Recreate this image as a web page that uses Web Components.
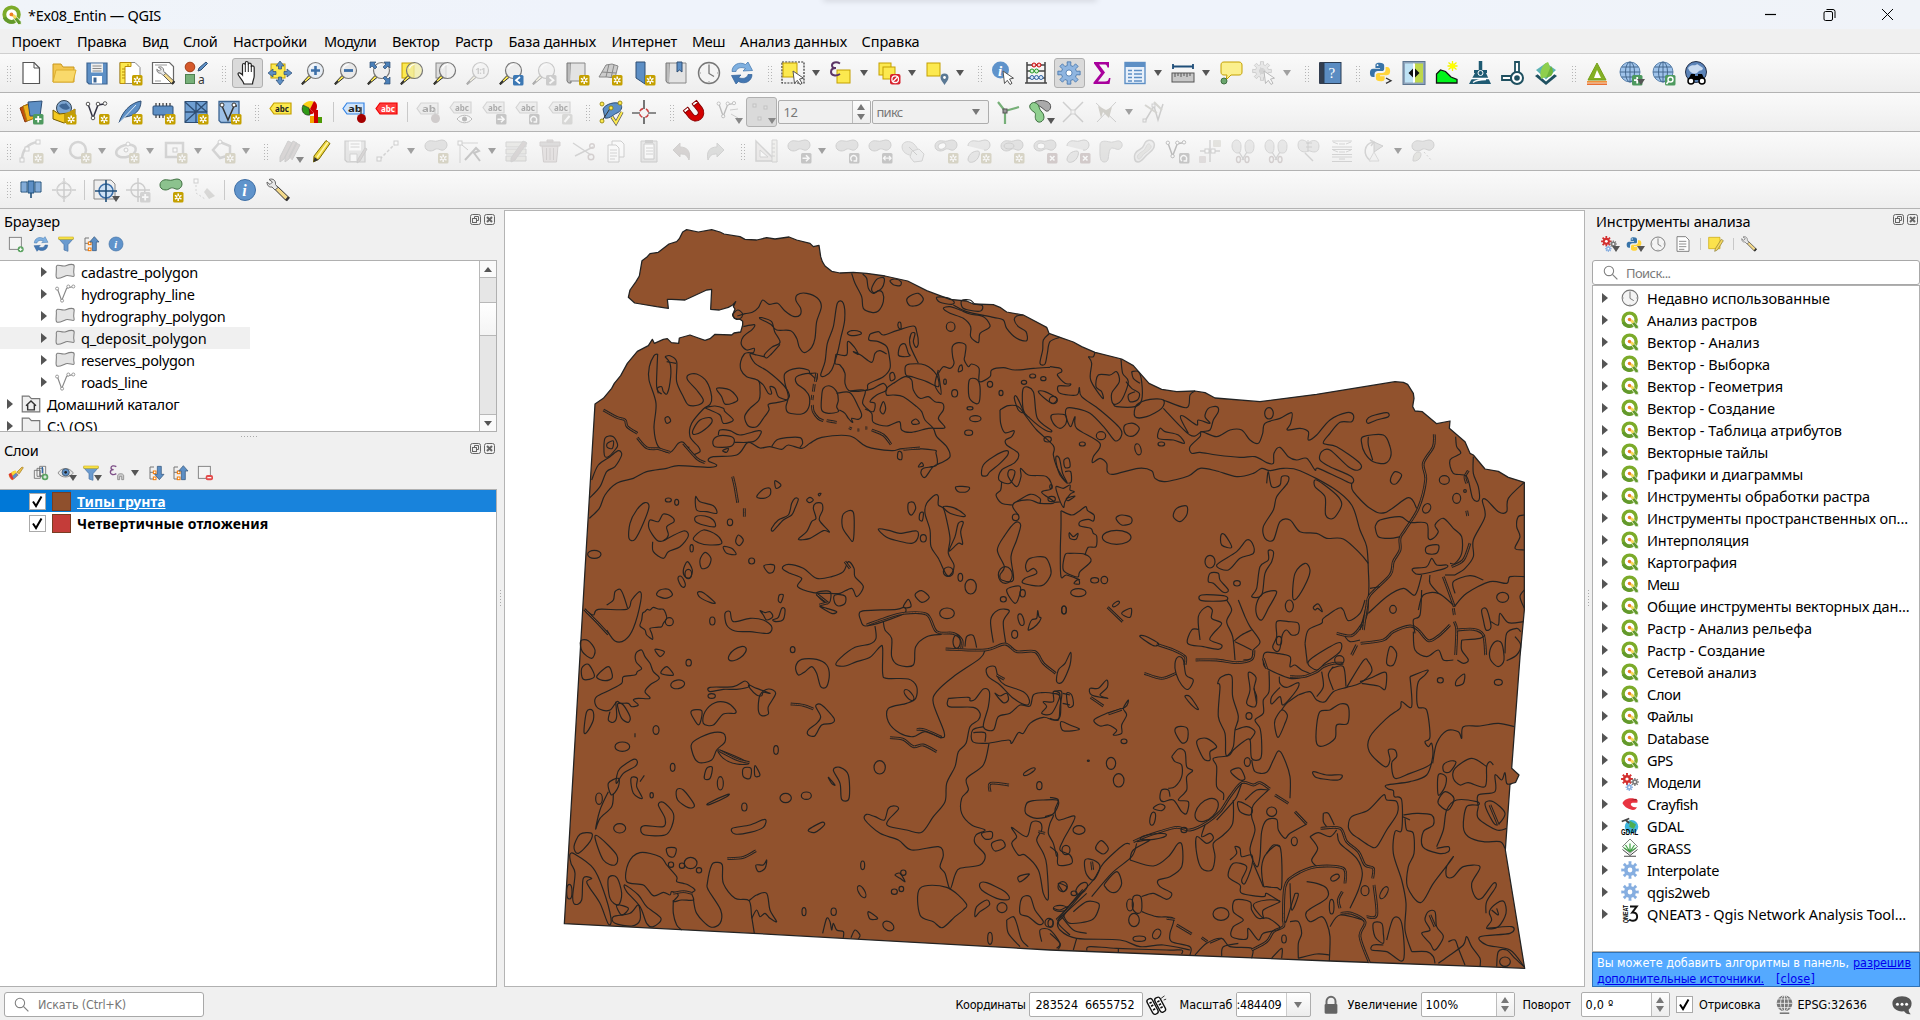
<!DOCTYPE html>
<html lang="ru">
<head>
<meta charset="utf-8">
<title>*Ex08_Entin — QGIS</title>
<style>
html,body{margin:0;height:100%;overflow:hidden}
body{font-family:"Noto Sans","Open Sans",sans-serif;font-size:14px;color:#000;background:#f0f0f0}
</style>
</head>
<body>
<app-window></app-window>
<script>
/* ---------- icon library (24 x 24 grid) ---------- */
const badge=(c,i)=>`<g transform="translate(14 14)"><rect width="10.5" height="10.5" rx="1.5" fill="${c}"/>${i}</g>`;
const STAR=badge('#c4a000','<path d="M5.2 1.5v7.4M1.9 3.3l6.6 3.8M8.5 3.3L1.9 7.1" stroke="#fff" stroke-width="1.5"/><circle cx="5.2" cy="5.2" r="1.1" fill="#c4a000"/>');
const PLUS=badge('#4e9a5f','<path d="M5.2 2v6.5M2 5.2h6.5" stroke="#fff" stroke-width="1.8"/>');
const GPLUS=badge('#999','<path d="M5.2 2v6.5M2 5.2h6.5" stroke="#fff" stroke-width="1.8"/>');
const ARR=badge('#777','<path d="M1.5 5.2h6M5 2.2l3 3-3 3" stroke="#fff" stroke-width="1.6" fill="none"/>');
const ROT=badge('#777','<path d="M3 8a3 3 0 1 1 4-.5M7.500 5v3h-3" stroke="#fff" stroke-width="1.4" fill="none"/>');
const TWO=badge('#777','<path d="M1.500 5.200h7.500M3.500 3l-2 2.200 2 2.200M7 3l2 2.200-2 2.200" stroke="#fff" stroke-width="1.3" fill="none"/>');
const XB=badge('#c77','<path d="M3 3l4.500 4.500M7.500 3L3 7.500" stroke="#fff" stroke-width="1.600"/>');
const lens=(f,s='#777')=>`<path d="M1.500 23.500l-.8-1.200L8 14.500l2 2z" fill="#fce94f" stroke="#333" stroke-width="1"/><path d="M1 23.500l3-3.500" stroke="#333" stroke-width="1.600"/><circle cx="14.500" cy="9.500" r="8" fill="${f}" stroke="${s}" stroke-width="1.200"/><path d="M9.500 7.500a5.500 5.500 0 0 1 5-4" stroke="#fff" stroke-width="1.200" fill="none"/>`;
const blob='<path d="M1 7c0-4 4-6 8-5s6-1 9-1 5 2 5 5-3 6-6 5-4-2-7 0-9 1-9-4z" fill="#bdbdbd" stroke="#8a8a8a"/>';
const smallBlob='<path d="M1 7c0-4 4-6 8-5s6-1 9-1 5 2 5 5-3 6-6 5" fill="#ccc" stroke="#8a8a8a"/><path d="M1 20c1-5 5-8 10-8 3 0 1 8-3 10-3 2-7 2-7-2z" fill="#ccc" stroke="#8a8a8a"/>';
const vline='<path d="M3 4l5 14 5-13 6-1" fill="none" stroke="#555" stroke-width="1.500"/><g fill="#fff" stroke="#555"><circle cx="3" cy="4" r="1.800"/><circle cx="8" cy="18" r="1.800"/><circle cx="13" cy="4" r="1.800"/><circle cx="20" cy="3.500" r="1.800"/></g>';
const gearPath=(c,x,y,r,st='none',hole='#fff')=>{let d='';for(let i=0;i<16;i++){const a=i*Math.PI/8,rr=i%2?r*.68:r;const w=.17;[a-w,a+w].forEach((b,k)=>{d+=(i||k?'L':'M')+(x+Math.cos(b)*rr).toFixed(2)+' '+(y+Math.sin(b)*rr).toFixed(2)})}return`<path d="${d}z" fill="${c}" stroke="${st}" stroke-width=".8"/><circle cx="${x}" cy="${y}" r="${r*.27}" fill="${hole}" stroke="${st}" stroke-width=".8"/>`};
const tag=(f,s,t,c='#222')=>`<path d="M1 7.500L5 2h17v11H5z" fill="${f}" stroke="${s}" stroke-width="1.200"/><text x="6" y="10.600" font-size="9" font-weight="bold" font-family="Noto Sans,sans-serif" fill="${c}" textLength="14" lengthAdjust="spacingAndGlyphs">${t}</text>`;
const globe=(x=12,y=11,r=10)=>`<circle cx="${x}" cy="${y}" r="${r}" fill="#9fc3ea" stroke="#5a82ad"/><g fill="none" stroke="#44688f" stroke-width="1"><ellipse cx="${x}" cy="${y}" rx="${r*.45}" ry="${r}"/><path d="M${x} ${y-r}v${2*r}M${x-r} ${y}h${2*r}M${x-r*.85} ${y-r*.5}h${1.7*r}M${x-r*.85} ${y+r*.5}h${1.7*r}"/></g>`;
const python='<path d="M11.500 2C7 2 7 4 7 5v2.500h5v1H4.500C2 8.500 1 10.500 1 13s1 4.500 3.500 4.500H6v-3C6 12 8 11 9.500 11H14c1.500 0 2.500-1 2.500-2.500V5c0-2-2-3-5-3z" fill="#3873a8"/><path d="M12.500 22c4.500 0 4.500-2 4.500-3v-2.500h-5v-1h7.500c2.500 0 3.500-2 3.500-4.500s-1-4.500-3.500-4.500H18v3c0 2.500-2 3.500-3.500 3.500H10c-1.500 0-2.500 1-2.500 2.500V19c0 2 2 3 5 3z" fill="#ffd43b"/><circle cx="9.300" cy="4.500" r="1" fill="#fff"/>';
const wrench='<path d="M8 9l3-1 11.500 11c1 1.500-1.500 4-3 3L8.500 11z" fill="#f3d98a" stroke="#333"/><path d="M20 22.500l3-3.500" stroke="#333" stroke-width="2.500"/><path d="M3 1.500c4-1.500 7 1 6.500 5l2.500 3-3 2.500-3-3C2.500 9.500 1 7 1 4l3 2.500L6.500 4z" fill="#e8e8e8" stroke="#666"/>';
const cursor='<path d="M12 10l1.500 12.500 2.800-3.200 2.700 4.200 2-1.200-2.500-4.300 4-.8z" fill="#fff" stroke="#555"/>';
const refresh='<path d="M2 10.500C2 4 9 0 15.500 3.500L18 1l4.500 8.500-9.500.5 2.500-2.500C11 5.500 6.500 7 6 10.500z" fill="#7fb0e0" stroke="#3d73ab" stroke-width=".7"/><path d="M22 13.500C22 20 15 24 8.500 20.500L6 23l-4.500-8.500L11 14l-2.500 2.500c4.500 2 9 .5 9.500-3z" fill="#4377b2" stroke="#2f5f97" stroke-width=".7"/>';
const qlogo='<circle cx="11.500" cy="11.500" r="8.700" fill="#fff" stroke="#7cab2a" stroke-width="4.600"/><path d="M3 15a9 9 0 0 0 12 4.500" stroke="#62992c" stroke-width="4.400"/><path d="M13.500 15.500l3-2.500 6.500 7v3.500h-3.500z" fill="#62992c" stroke="#fff" stroke-width=".9"/><path d="M11.500 11l4 .8 2.500 3-2.500 2-4-3.500z" fill="#f6d95c"/><circle cx="11.300" cy="11.300" r="2.300" fill="#ee7f25"/>';
const clock='<circle cx="12" cy="12" r="10.500" fill="#f4f4f4" stroke="#777" stroke-width="1.400"/><path d="M12 4v8.500l5 3" fill="none" stroke="#777" stroke-width="1.300"/><path d="M12 2.500v1.500M12 20v1.500M2.500 12H4M20 12h1.500" stroke="#999"/>';
const info='<circle cx="12" cy="12" r="10.500" fill="#5f93cb" stroke="#3f6fa5"/><text x="9.300" y="18" font-size="16" font-style="italic" font-weight="bold" font-family="Liberation Serif,serif" fill="#fff">i</text>';
const funnel='<path d="M1 4h22l-8 9v10l-6-2v-8z" fill="#6b9bcf" stroke="#4671a3"/><path d="M1 1.500h22v3.500H1z" fill="#fce94f" stroke="#c4a000" stroke-width=".8"/>';
const treeic='<path d="M3 3h6M3 3v18h7M3 11h7" fill="none" stroke="#777" stroke-width="1.500"/><rect x="8" y="9" width="4" height="4" fill="#fff" stroke="#f57900" stroke-width="1.500"/><rect x="8" y="18" width="4" height="4" fill="#fff" stroke="#f57900" stroke-width="1.500"/>';
const cross='<path d="M12 0v24M0 12h24" stroke="#888" stroke-width="1.500"/><circle cx="12" cy="12" r="7" fill="none" stroke="#888" stroke-width="1.500"/>';
const doc='<path d="M3 1h13l5 5v17H3z" fill="#fff" stroke="#666" stroke-width="1.200"/>';
const shears='<path d="M8 13l5 8M16 13l-5 8" stroke="#999" stroke-width="1.400"/><ellipse cx="7.500" cy="20.500" rx="2" ry="3" fill="none" stroke="#b88" stroke-width="1.400"/><ellipse cx="16" cy="20.500" rx="2" ry="3" fill="none" stroke="#b88" stroke-width="1.400"/>';
const ICONS={
qlogo,clock,info,funnel,python,wrench,refresh,
new:'<path d="M4 1.500h11l5.500 5.500v15.500H4z" fill="#fff" stroke="#555" stroke-width="1.200"/><path d="M15 1.500V7h5.500" fill="none" stroke="#555"/>',
open:'<path d="M1 21V3h8l2 3h11v15z" fill="#f3c64f" stroke="#c9971d"/><path d="M1 21L4 9h20l-3 12z" fill="#f9d96b" stroke="#dcae2e"/>',
save:'<path d="M2 2h20v21H4l-2-2z" fill="#5d8fc5" stroke="#3c6491" stroke-width="1.200"/><path d="M6 2.500h12v9H6z" fill="#eee"/><path d="M7.500 5h9M7.500 7.500h9M7.500 10h9" stroke="#888"/><path d="M7 15h10v7.500H7z" fill="#fff"/><path d="M8.500 16.500h3v5h-3z" fill="#3c6491"/>',
layout:'<path d="M2 1.500h15l5 5v16H2z" fill="#fff" stroke="#888"/><path d="M2 1.500h11v4H7v17H2z" fill="#fce94f" stroke="#b98d0b"/><path d="M4 8h3M4 11h3M4 14h3M4 17h3M10 3v2" stroke="#b98d0b"/>'+STAR,
layman:'<path d="M1.500 1.500h17l4 4v17h-21z" fill="#fff" stroke="#666" stroke-width="1.200"/><path d="M4 4h12M4 20h6" stroke="#999"/><g transform="translate(5 5) scale(.8)">'+wrench+'</g>',
style:'<circle cx="6" cy="6" r="4.800" fill="#d5592b" stroke="#a33d17"/><path d="M14 10l1-3 7-6 1.500 1.500L17 9z" fill="#5d8fc5" stroke="#2e4e74"/><rect x="1.500" y="13.500" width="9" height="9" fill="#77b079" stroke="#4e8050"/><text x="14" y="22.500" font-size="12" font-family="Noto Sans,sans-serif" fill="#333">a</text>',
hand:'<path d="M8 23c-1-4-6-8-6-10s2.500-1.500 4.500 1V4c0-2 2.500-2 2.800 0V2c0-2 2.700-2 3 0v1.500c.3-2 3-2 3 .3V6c.4-1.800 2.800-1.500 2.900.5V15c0 3-1.700 5-1.700 8z" fill="#fff" stroke="#222" stroke-width="1.200" transform="translate(1 0)"/><path d="M10.300 4v7M13.300 3v8M16.300 5v6" stroke="#222"/>',
panzoom:'<rect x="3" y="3" width="14" height="14" fill="#fce94f" stroke="#c4a000"/><path d="M12 0l4 5h-2.500v3h-3V5H8zM12 24l4-5h-2.500v-3h-3v3H8zM0 12l5-4v2.500h3v3H5V16zM24 12l-5-4v2.500h-3v3h3V16z" fill="#5d8fc5" stroke="#2e4e74" stroke-width=".7"/>',
zin:lens('#e6edf5')+'<path d="M14.500 5v9M10 9.500h9" stroke="#3c6fa8" stroke-width="2.600"/>',
zout:lens('#e9e9e9')+'<path d="M10 9.500h9" stroke="#3c6fa8" stroke-width="2.800"/>',
zfull:lens('#eee')+'<path d="M3 1h6L7 3l3 3-2 2-3-3-2 2zM23 1h-6l2 2-3 3 2 2 3-3 2 2zM23 23v-7l-2 2-3-3-2 2 3 3-2 3z" fill="#4b80b8" stroke="#2e4e74" stroke-width=".7"/>',
zsel:'<rect x="2" y="2" width="12" height="15" fill="#fce94f" stroke="#c4a000"/>'+lens('#f2eda8bb'),
zlay:'<rect x="3" y="2" width="10" height="15" fill="#ddd" stroke="#888"/>'+lens('#f0f0f0bb'),
z11:lens('#eee')+'<text x="9.300" y="13" font-size="9" font-weight="bold" font-family="Noto Sans,sans-serif" fill="#888" textLength="10.500">1:1</text>',
zlast:lens('#eee')+badge('#3c78b4','<path d="M7 2L3 5.200 7 8.500" stroke="#fff" stroke-width="1.800" fill="none"/>'),
znext:lens('#eee')+badge('#888','<path d="M3.500 2l4 3.200-4 3.300" stroke="#fff" stroke-width="1.800" fill="none"/>'),
bmk:'<path d="M2 2h4v20H3.500L2 20z" fill="#bbb" stroke="#777"/><path d="M6 2h14v18H5" fill="#e3e3e3" stroke="#888"/>'+STAR,
mesh:'<path d="M1 16L8 4l6-1 6 2-3 12-8-1z" fill="#ccc" stroke="#888"/><path d="M4 11l14 1M11 3L8 16M16 4l-3 13" fill="none" stroke="#888"/>'+STAR,
book:'<path d="M5 1h9v22l-4.500-3L5 17z" fill="#5d8fc5" stroke="#2e4e74"/>'+STAR,
bmks:'<path d="M2 2h4v20H3.500L2 20z" fill="#bbb" stroke="#777"/><path d="M6 2h16v20H5" fill="#e3e3e3" stroke="#888"/><path d="M13 1h5v10l-2.500-2L13 11z" fill="#5d8fc5" stroke="#2e4e74"/>',
select:'<rect x="1" y="1" width="22" height="21" fill="none" stroke="#333" stroke-width="1.200" stroke-dasharray="2 1.200"/><rect x="2" y="2" width="14" height="14" fill="#fce94f" stroke="#c4a000"/>'+cursor,
epsel:'<rect x="8" y="9" width="13" height="13" fill="#fce94f" stroke="#c4a000"/><path d="M11 2.500C7 0 3 1.500 3 4.500c0 2 2 2.500 4 2.500-3 0-5 1-5 4 0 3.500 5 4.500 9 2" fill="none" stroke="#5c3566" stroke-width="2"/>',
desel:'<rect x="2" y="2" width="12" height="12" fill="#fce94f" stroke="#c4a000"/><rect x="6" y="6" width="12" height="12" fill="#fce94f" stroke="#c4a000"/><rect x="13" y="13" width="10.500" height="10.500" rx="2" fill="#d8232e"/><circle cx="18.200" cy="18.200" r="3.300" fill="none" stroke="#fff" stroke-width="1.300"/><path d="M16 20.500l4.500-4.500" stroke="#fff" stroke-width="1.300"/>',
selloc:'<rect x="2" y="2" width="13" height="13" fill="#fce94f" stroke="#c4a000"/><path d="M19.500 24c-2-3.500-4-5-4-7.500a4 4 0 0 1 8 0c0 2.500-2 4-4 7.500z" fill="#5a7894"/><circle cx="19.500" cy="16.500" r="1.400" fill="#fff"/>',
ident:'<circle cx="9.500" cy="9" r="8.500" fill="#5f93cb"/><text x="7" y="14.500" font-size="15" font-style="italic" font-weight="bold" font-family="Liberation Serif,serif" fill="#fff">i</text>'+cursor,
abacus:'<path d="M3 1v21M21 1v21M1 22h22M3 4h18M3 10h18M3 17h18" stroke="#444" stroke-width="1.500"/><g fill="#f8d0d0" stroke="#cc0000"><circle cx="10" cy="4" r="2"/><circle cx="15" cy="4" r="2"/></g><g fill="#d5f5d5" stroke="#2a9a2a"><circle cx="8" cy="10" r="2"/><circle cx="12.500" cy="10" r="2"/></g><g fill="#d8e9fa" stroke="#3465a4"><circle cx="8" cy="16.500" r="2"/><circle cx="12.500" cy="16.500" r="2"/><circle cx="17" cy="16.500" r="2"/></g>',
gear:gearPath('#8fb5e0',12,12,11.300,'#4273ab'),
gearp:gearPath('#86aee0',12,12,11.800),
sigma:'<path d="M4 1h15v5.500h-1.500C17 4 16 3.500 14 3.500H9l6 8-7 9h7c2.500 0 3.500-1 4-3.500h1.500L19.500 23H3.500v-1.500L11 12 4 2.500z" fill="#a8009c"/>',
table:'<rect x="2" y="1.500" width="20" height="21" fill="#e8f0fa" stroke="#5d8fc5" stroke-width="1.400"/><path d="M2 2h20v4H2z" fill="#5d8fc5"/><path d="M5 9.500h4M11 9.500h8M5 13h4M11 13h8M5 16.500h4M11 16.500h8M5 20h4M11 20h8" stroke="#5d8fc5" stroke-width="1.300"/>',
ruler:'<path d="M2 5.500h20M2 3v5M22 3v5" stroke="#1f4e79" stroke-width="1.800"/><rect x="1" y="12" width="22" height="9" fill="#c8c8c8" stroke="#555"/><path d="M4 12v4M7 12v3M10 12v4M13 12v3M16 12v4M19 12v3" stroke="#555"/>',
note:'<path d="M5 1h15c2 0 3 1.500 3 3v7c0 2-1 3-3 3h-8l-5 5 1-5H5c-2 0-3-1-3-3V4c0-2 1-3 3-3z" fill="#fbef8d" stroke="#c4a000"/><circle cx="5" cy="20" r="3" fill="#6aa56d" stroke="#3f6f41"/>',
action:gearPath('#ccc',10,10,9.500,'#777','#eee')+'<path d="M8 6l6 4-6 4z" fill="#999"/>'+cursor,
help:'<rect x="1" y="1" width="22" height="22" rx="1" fill="#333e50"/><rect x="6" y="1.500" width="17" height="21" fill="#5b8cc2" stroke="#2b3c52"/><text x="10.500" y="17" font-size="15" font-family="Liberation Serif,serif" fill="#fff">?</text>',
pycon:'<g transform="scale(.92)">'+python+'</g><path d="M17 17l5 2.700-5 2.700" fill="none" stroke="#333" stroke-width="1.300"/>',
swipe:'<rect x="1" y=".5" width="22" height="23" fill="#8fa4bb" stroke="#5c7590"/><rect x="3" y="2.500" width="9" height="19" fill="#bfe3f5"/><rect x="12" y="2.500" width="9" height="19" fill="#bfd84a"/><path d="M12 2.500v19" stroke="#fff" stroke-width="2"/><path d="M11 7.500v9L6.500 12zM13 7.500v9l4.500-4.500z" fill="#111"/>',
terrain:'<path d="M1.500 22V13l4-4 5 1.500L16 16l6 2.500V22z" fill="#00f51b" stroke="#111" stroke-width="1.300"/><path d="M17.500 0v10M13.500 1.500l8 7M21.500 1.500l-8 7M12.500 5h10" stroke="#f5f500" stroke-width="1.300"/><circle cx="17.500" cy="5" r="2.700" fill="#ff0"/>',
boat:'<path d="M1 23L7 12h11l5 11z" fill="#1f5a72"/><path d="M3 17.500h18M5 21.500c4-3 8-3 13-3" stroke="#fff" stroke-width="1.300"/><path d="M6 9h13v3H6z" fill="#1f5a72"/><path d="M12.500 0v11" stroke="#1f5a72" stroke-width="3.500"/><circle cx="12.500" cy="12" r="2.500" fill="#1f5a72" stroke="#fff"/>',
valve:'<path d="M1 15h9v4H1zM14 1h4v12h-4z" fill="#fff" stroke="#1f5060" stroke-width="1.800"/><circle cx="16" cy="17" r="6" fill="#fff" stroke="#1f5060" stroke-width="2"/><circle cx="16" cy="17" r="2.800" fill="#1f5060"/>',
leaf:'<path d="M1 15l11 9 11-9-3-2H4z" fill="#1f5060"/><path d="M1 11l11 9.500L23 11 12 3z" fill="#fff"/><path d="M2 9l10-7 10 7-10 9.500z" fill="#5db3b5"/><path d="M7 18C5 11 8 3 14 1c3 5 3 12-2 15-2 1-4 1-5 2z" fill="#8fcf4d"/><path d="M17 5c2 3 3 7 0 10l-5 2" fill="#6fb53a"/>',
tri:'<path d="M12 2l9 17H3z" fill="#84b025" stroke="#75a01a"/><path d="M12 9l4 8H9z" fill="#fff"/><path d="M2 20.800h20" stroke="#f0913c" stroke-width="1.800"/><path d="M2 23.200h20" stroke="#e9601b" stroke-width="1.400"/>',
globep:globe()+badge('#4e9a5f','<path d="M5.200 2v6.500M2 5.200h6.500" stroke="#fff" stroke-width="1.800"/>'),
globes:globe()+badge('#4e9a5f','<circle cx="5.500" cy="4.500" r="2.500" fill="none" stroke="#fff" stroke-width="1.400"/><path d="M3.500 6.500l-2 2.500" stroke="#fff" stroke-width="1.600"/>'),
globeb:'<circle cx="12" cy="11" r="10.500" fill="#5b83b8" stroke="#222f48"/><path d="M4 7c4-5 7-1 9-4l6 4c-1 4-3 1-5 4s-8 2-10-4z" fill="#c8daf0"/><path d="M7 13h4v2h3v-2h4l3 6H4z" fill="#000"/><circle cx="7" cy="20" r="3" fill="#fff" stroke="#000" stroke-width="1.500"/><circle cx="18" cy="20" r="3" fill="#fff" stroke="#000" stroke-width="1.500"/>',
addlayer:'<path d="M1 8l10-5 5 14-10 5z" fill="#c4500f" stroke="#8a3607"/><path d="M4 6l11-3 4 14-11 4z" fill="#f0b21c" stroke="#a87a0e"/><path d="M9 2l14-1-2 15H11z" fill="#5d8fc5" stroke="#2e4e74"/>'+PLUS,
geopkg:'<circle cx="12" cy="8" r="7.500" fill="#7ea6d2" stroke="#345"/><path d="M7 6c3-4 5-1 7-3l4 5c-3 3-8 2-11-2z" fill="#3f6796"/><path d="M1 10l6 4 10-1 6-4v9l-11 5-11-4z" fill="#f3c921" stroke="#745b00"/><path d="M12 14v9l11-4V9z" fill="#c29b0c"/>'+STAR,
vnew:vline.replace('fill="none" stroke="#555"','fill="none" stroke="#334"')+STAR,
feather:'<path d="M1 23C4 12 12 3 23 1c0 9-6 15-16 16z" fill="#5d8fc5" stroke="#2e4e74"/><path d="M1 23L18 5" stroke="#e0ecf8"/>'+STAR,
chip:'<path d="M5 3v15M8.500 3v15M12 3v15M15.500 3v15M19 3v15" stroke="#444" stroke-width="1.300"/><rect x="2" y="6" width="20" height="9" rx="1" fill="#5d8fc5" stroke="#2e4e74"/>'+STAR,
meshnew:'<rect x="1" y="1.500" width="22" height="21" fill="#6f9fd2" stroke="#2e4e74"/><path d="M1 12h22M12 1v22M1 2l11 10L1 22M12 12L23 2M12 2l5.500 5.500L23 12" fill="none" stroke="#2e4e74" stroke-width="1.300"/>'+STAR,
virt:'<path d="M2 1.500h20v21H4l-2-2z" fill="#9dc0e6" stroke="#3c6491" stroke-width="1.300"/><path d="M5 6l6 14 6-14h3" fill="none" stroke="#333" stroke-width="1.500"/><circle cx="5" cy="5" r="2" fill="#fff" stroke="#333"/><circle cx="17" cy="5" r="2" fill="#fff" stroke="#333"/>'+STAR,
abc:'<g transform="translate(1 1)">'+tag('#fce94f','#c4a000','abc')+'</g>',
chart:'<path d="M9 9L2 5C5 1 10 0 13 2z" fill="#fcd116"/><path d="M9 9l4-8c4 2 4 8 0 12z" fill="#cc0000"/><path d="M9 9l4 4c-4 3-11 0-12-5z" fill="#cc0000"/><path d="M8 8L2 5c-3 7 2 11 7 10z" fill="#2f9a16" stroke="#222" stroke-width=".6"/><path d="M9 16h4v7H9z" fill="#f5a400"/><path d="M13 10h4v13h-4z" fill="#cc0000"/><path d="M17 17h4v6h-4z" fill="#4e9a06"/>',
abpin:'<g transform="translate(0 1)">'+tag('#cfe4fb','#3584e4','ab')+'</g><path d="M19 7v9" stroke="#555" stroke-width="1.500"/><circle cx="19.500" cy="18.500" r="4.500" fill="#a40000"/>',
abcr:'<g transform="translate(0 1)">'+tag('#ff3c3c','#e00','abc','#fff')+'</g>',
l1:'<g transform="translate(0 1)">'+tag('#ddd','#999','ab')+'</g><circle cx="19.500" cy="18.500" r="4.500" fill="#b08080"/><path d="M19 9v7" stroke="#888"/>',
l2:tag('#ddd','#999','abc')+'<path d="M8 19c4-5 11-5 15 0-4 5-11 5-15 0z" fill="#fff" stroke="#555"/><circle cx="15.500" cy="19" r="2.500" fill="#555"/>',
l3:tag('#ddd','#999','abc')+ARR,l4:tag('#ddd','#999','abc')+ROT,l5:tag('#ddd','#999','abc')+badge('#aa9','<path d="M2.500 8l5-6" stroke="#fff" stroke-width="2"/>'),
topo:'<path d="M4 9c2-5 13-8 17-5s0 8-3 9-7 6-12 5z" fill="#5d8fc5" stroke="#2e4e74"/><path d="M3 21L12 7" stroke="#333"/><g fill="#fce94f" stroke="#8a7a00" stroke-width=".8"><circle cx="3" cy="4" r="2"/><circle cx="21" cy="3" r="2"/><circle cx="12" cy="8" r="2"/><circle cx="3" cy="21" r="2"/></g><path d="M13 17l4 6 6-11" fill="none" stroke="#555" stroke-width="3.400"/><path d="M13 17l4 6 6-11" fill="none" stroke="#fce94f" stroke-width="2"/>',
geox:'<path d="M12 0v9M12 17v7M0 13h8M16 13h8" stroke="#222" stroke-width="1.200"/><circle cx="12" cy="13" r="4.500" fill="none" stroke="#c44" stroke-width="1.600" stroke-dasharray="4 3.070" stroke-dashoffset="-1.500"/>',
magnet:'<g transform="rotate(-38 12 12) translate(12 12) scale(.92) translate(-12 -12)"><path d="M3 4v9a9 9 0 0 0 18 0V4h-6v9a3 3 0 0 1-6 0V4z" fill="#d40000" stroke="#800"/><path d="M3 3h6v3H3zM15 3h6v3h-6z" fill="#fff" stroke="#800"/></g>',
snapv:'<g transform="scale(.9)">'+vline+'</g><path d="M14 10l8-1M15 14l7 4" stroke="#888"/>',
snapp:'<g fill="#eee" stroke="#999"><rect x="4" y="4" width="3" height="3"/><rect x="15" y="6" width="3" height="3"/><rect x="9" y="17" width="3" height="3"/></g>',
yint:'<path d="M10 11v13M10 11L3 2M10 11l14-4" stroke="#77b079" stroke-width="2.200"/><rect x="8" y="9" width="4" height="4" fill="#999" stroke="#555"/>',
avoid:'<path d="M6 3c3-4 14-3 16 1s-1 8-4 7l-5-4z" fill="#aaa" stroke="#555"/><path d="M2 5c2-4 8-3 9 2s5 5 5 10-6 7-8 3 1-6-2-8-5-4-4-7z" fill="#8fcf8f" stroke="#3f6f41"/>',
xx:'<path d="M2 2l20 20M22 2L2 22" stroke="#888" stroke-width="1.500"/><rect x="10" y="10" width="4" height="4" fill="#eee" stroke="#999"/>',
self:'<path d="M2 3l20 19M22 2L3 22" stroke="#888"/><path d="M4 6l8 4 6-3-3 11-6-6-2 6z" fill="#a08c50"/>',
trace:'<path d="M3 21L12 6l4 14 5-16" fill="none" stroke="#888" stroke-width="1.500"/><path d="M3 5l12 8M12 2l8 8" stroke="#a59c70" stroke-width="2"/><rect x="1" y="19" width="3" height="3" fill="#eee" stroke="#888"/><rect x="10" y="4" width="3" height="3" fill="#eee" stroke="#888"/>',
c1:'<path d="M3 21C3 11 9 4 19 3" fill="none" stroke="#999" stroke-width="2.500"/><rect x="1" y="19" width="4" height="4" fill="#fff" stroke="#888"/><rect x="17" y="1" width="4" height="4" fill="#fff" stroke="#888"/><rect x="6" y="8" width="4" height="4" fill="#fff" stroke="#888"/>'+STAR,
c2:'<circle cx="11" cy="11" r="8" fill="none" stroke="#999" stroke-width="2.500"/>'+STAR,
c3:'<ellipse cx="11" cy="12" rx="10" ry="6" fill="none" stroke="#999" stroke-width="2.500" transform="rotate(-15 11 12)"/><circle cx="11" cy="11" r="2" fill="#fff" stroke="#888"/><circle cx="13" cy="5" r="2" fill="#fff" stroke="#888"/>'+STAR,
c4:'<rect x="3" y="4" width="17" height="14" fill="none" stroke="#999" stroke-width="2.500"/><rect x="10" y="9" width="4" height="4" fill="#fff" stroke="#888"/>'+STAR,
c5:'<path d="M9 3l10 4v9l-10 3-7-8z" fill="none" stroke="#999" stroke-width="2.500"/><circle cx="9" cy="3" r="2" fill="#fff" stroke="#888"/>'+STAR,
pencils:'<path d="M3 18L11 2l4 2-8 16-4 3zM8 18l8-16 4 2-8 16-4 3zM12 18l7-14 4 2-8 15" fill="#b99" stroke="#888"/>',
pencil:'<path d="M4 17L16 1.500l4 3L9 20l-5.500 3z" fill="#ecd43c" stroke="#7c6b00"/><path d="M7 18.500L18 3" stroke="#fff6a8" stroke-width="1.500"/><path d="M3.500 23l1-5 4 3z" fill="#333"/>',
savee:'<path d="M2 2h20v21H4l-2-2z" fill="#ccc" stroke="#888" stroke-width="1.200"/><path d="M6 2.500h12v9H6z" fill="#fff"/><path d="M7.500 5h9M7.500 8h9" stroke="#999"/><path d="M7 15h7v7.500H7z" fill="#fff" stroke="#999"/><path d="M22 9l2 1-7 12-3 2 1-4z" fill="#b99" stroke="#888"/>',
seg:'<path d="M4 20L20 4" stroke="#999" stroke-width="1.500" stroke-dasharray="3 2"/><rect x="1" y="18" width="4" height="4" fill="#fff" stroke="#888"/><rect x="18" y="2" width="4" height="4" fill="#fff" stroke="#888"/>',
poladd:blob+STAR,polmov:blob+ARR,polrot:blob+ROT,polscl:blob+TWO,
vtool:'<path d="M3 24V4h18" fill="none" stroke="#999"/><rect x="1" y="2" width="4" height="4" fill="#fff" stroke="#888"/><path d="M5 6l6 5" stroke="#888"/><path d="M8 21L19 9l3 3-5 2 6 8" fill="none" stroke="#777" stroke-width="2"/>',
multi:'<path d="M1 3h20v5H1zM1 10h20v5H1zM1 17h20v5H1z" fill="#d5d3b8" stroke="#999"/><path d="M6 19L18 2l4 2L10 21l-4 2z" fill="#b99" stroke="#999"/>',
trash:'<path d="M4 7h16l-1.500 16h-13z" fill="#dbb" stroke="#a88"/><path d="M2 3h20v4H2zM9 1h6v2H9z" fill="#baa" stroke="#a88"/><path d="M8.500 9v12M12 9v12M15.500 9v12" stroke="#a88"/>',
cut:'<path d="M2 4l18 12M4 17l18-9" stroke="#999" stroke-width="1.500"/><circle cx="20" cy="18" r="2.800" fill="none" stroke="#b88" stroke-width="1.500"/><circle cx="21" cy="7" r="2.300" fill="none" stroke="#b88" stroke-width="1.500"/>',
copy:'<path d="M8 2h9l3 3v13H8z" fill="#fff" stroke="#888"/><path d="M4 6h8l3 3v14H4z" fill="#fff" stroke="#888"/><path d="M6 11h7M6 14h7M6 17h7M6 20h5" stroke="#999"/>',
paste:'<path d="M4 2h16v21H4z" fill="#ccc" stroke="#888"/><path d="M7 5h10v15H7z" fill="#fff" stroke="#888"/><path d="M8 1h8v3H8z" fill="#888"/><path d="M9 9h7M9 12h7M9 15h7" stroke="#999"/>',
undo:'<path d="M3 11l7-7v4c7 0 11 4 9 13-2-5-4-6-9-6v3z" fill="#b5948a" stroke="#9c8b80"/>',
redo:'<path d="M21 11l-7-7v4c-7 0-11 4-9 13 2-5 4-6 9-6v3z" fill="#b0b5b0" stroke="#909590"/>',
setsq:'<path d="M2 2v20h20z" fill="#e5d5d0" stroke="#999" stroke-width="1.500"/><path d="M6 11v7h8z" fill="#fff" stroke="#999"/><path d="M18 1h5v22h-5z" fill="#e8e4cc" stroke="#999"/><path d="M18 5h3M18 9h3M18 13h3M18 17h3" stroke="#999"/>',
simp:'<path d="M1 8c0-6 8-7 12-3s6 9 2 11-14-1-14-8z" fill="#ccc" stroke="#999"/><path d="M11 12l7-2 5 5-2 7-8 1-4-5z" fill="#dde2e8" stroke="#999"/><path d="M8 8l8 8" stroke="#888"/>',
ring:blob+'<ellipse cx="8" cy="7" rx="4" ry="3" fill="#fff" stroke="#999" transform="rotate(-25 8 7)"/>'+STAR,
part:smallBlob+STAR,fill:blob+'<ellipse cx="9" cy="7" rx="5" ry="3" fill="#bbb" stroke="#888"/>'+STAR,
delring:blob+'<ellipse cx="8" cy="7" rx="4" ry="3" fill="#fff" stroke="#999"/>'+XB,delpart:smallBlob+XB,
reshape:'<path d="M1 6c0-5 6-4 10-3s8-3 11 0 0 9-5 7-6-1-7 4 0 9-5 9-4-9-4-17z" fill="#c4c4bc" stroke="#999"/>',
offset:'<path d="M3 15C6 9 10 12 12 6s8-6 10-2-2 8-6 11-6 8-10 8-4-6-3-8z" fill="#ddd" stroke="#999" stroke-width="1.500"/><path d="M6 16c3-4 6-3 8-8s4-3 5-1-3 5-6 7-4 6-6 6-2-3-1-4z" fill="#c9c7b5" stroke="#aaa"/>',
vrev:'<g transform="scale(.95)">'+vline+'</g>'+ROT,
trim:'<path d="M12 1v22M2 12h20" stroke="#999" stroke-width="1.500"/><g fill="#fff" stroke="#888"><rect x="7" y="10" width="4" height="4"/><rect x="13" y="10" width="4" height="4"/></g><rect x="15" y="1" width="8" height="7" rx="1" fill="#c8bf98"/><rect x="1" y="17" width="7" height="7" rx="1" fill="#d5b0b0"/>',
split:'<path d="M1 7c0-8 9-8 9 0s-2 7-4 7-5-3-5-7zM14 7c0-8 9-8 9 0s-4 7-6 7-3-3-3-7z" fill="#ccc" stroke="#999"/>'+shears,
merge:'<path d="M1 6c0-8 9-5 10-1 1-4 11-6 11 2s-7 6-9 5-3 1-5 1-7-1-7-7z" fill="#ccc" stroke="#999"/><path d="M9 4h6M9 8h6M11 1v12" stroke="#888"/><path d="M8 14l8 8" stroke="#999" stroke-width="1.500"/>',
attrs:'<path d="M2 2h20M2 8h20M2 10.500h20M2 15.500h20M2 18h20M2 22.500h20M9 5h6M9 13h6M9 20h6" stroke="#999" stroke-width="1.200"/><path d="M8 5l-5-2M16 5l5-2M8 13l-5-2M16 13l5-2" stroke="#999"/>',
rotp:'<path d="M8 22C-1 16 1 5 10 3M7 1l4 2-3 4" fill="none" stroke="#999" stroke-width="1.500"/><path d="M11 3l9 4-9 6z" fill="#bbb" stroke="#888"/><path d="M6 22l5-9 5 9z" fill="#eee" stroke="#aaa"/>',
offp:blob+'<path d="M2 22c0-6 2-9 6-9s2 10-6 9z" fill="#cfc9a8" stroke="#999"/><path d="M13 13l8 9" stroke="#999" stroke-dasharray="2 2"/>',
sat:'<path d="M2 4h6v10H2zM16 4h6v10h-6z" fill="#a9c8ea" stroke="#1f4e79"/><path d="M4 4v10M6 4v10M18 4v10M20 4v10" stroke="#5d8fc5"/><path d="M9 3h6v12H9z" fill="#5d8fc5" stroke="#1f4e79"/><path d="M12 15v5" stroke="#1f4e79" stroke-width="1.600"/>',
tgt:cross+'<path d="M12 2L4 12l8 10 8-10z" fill="none" stroke="#aaa"/>',
gpsz:'<path d="M1 2h17l4 4v15H1z" fill="#eee" stroke="#888"/><circle cx="13" cy="13" r="7" fill="#cfe2f5" stroke="#3c6fa8" stroke-width="1.600"/><path d="M13 2v22M2 13h22" stroke="#1f4e79" stroke-width="1.600"/>',
tgtp:cross+GPLUS,
polgreen:blob.replace('#bdbdbd','#8cc28e').replace('#8a8a8a','#3f7041')+STAR,
gpst:'<path d="M4 3v12l9 6" fill="none" stroke="#999" stroke-dasharray="2 2"/><rect x="2" y="1" width="4" height="4" fill="#fff" stroke="#888"/><path d="M15 10l8 8-6 3-5-7z" fill="#a9a797"/>',
addbox:'<rect x="2" y="2" width="18" height="18" fill="#f4f4f4" stroke="#777" stroke-width="1.300"/><circle cx="19" cy="20" r="4.500" fill="#5ba360"/><path d="M19 17.500v5M16.500 20h5" stroke="#fff" stroke-width="1.500"/>',
treeup:treeic+'<path d="M17 1l7 8h-4v13h-6V9h-4z" fill="#5d8fc5" stroke="#2e4e74"/>',
treedn:treeic+'<path d="M17 22l7-8h-4V2h-6v12h-4z" fill="#5d8fc5" stroke="#2e4e74"/>',
brush:'<path d="M13 11l8-8 2 1-6 9z" fill="#e8c050" stroke="#a57914"/><path d="M1 14l8-5 7 6-9 8c-3-1-6-5-6-9z" fill="#e46a2a"/><path d="M5 11l6-3 2 3-6 5z" fill="#fcd835"/><path d="M9 21l6-6-3-3-6 5z" fill="#5d8fc5"/><path d="M1 14l5 8 2-2-4-8z" fill="#d33"/>',
addgrp:'<path d="M2 8h9v12H2zM6 5h9v12H6zM10 2h9v14h-9z" fill="#f2f2f2" stroke="#666" stroke-width="1.200"/><path d="M14 3v9" stroke="#2e66a4" stroke-width="2"/><circle cx="18" cy="18" r="5" fill="#5ba360"/><path d="M18 15.500v5M15.500 18h5" stroke="#fff" stroke-width="1.500"/>',
eye:'<path d="M0 12c5-9 17-9 23 0-6 8-18 8-23 0z" fill="#e5e5e5" stroke="#666"/><circle cx="11.500" cy="11" r="5.500" fill="#5d8fc5" stroke="#345"/><circle cx="11.500" cy="11" r="2" fill="#222"/>',
epsg:'<path d="M11 2.500C7 0 3 1.500 3 4.500c0 2 2 2.500 4 2.500-3 0-5 1-5 4 0 3.500 5 4.500 9 2" fill="none" stroke="#7d4f87" stroke-width="2"/><path d="M13 22v-6c0-4 9-4 9 0v6h-3v-5h-3v5z" fill="#ccc" stroke="#777"/>',
rembox:'<rect x="2" y="2" width="18" height="18" fill="#f4f4f4" stroke="#777" stroke-width="1.300"/><rect x="13" y="15" width="11" height="8" rx="3" fill="#e34b4b"/><path d="M15.500 19h6" stroke="#fff" stroke-width="1.800"/>',
poly:'<path d="M1.500 6C2 1 8 6.500 13 4.500S23 2 23 5s-1.500 6 0 11c0 3.500-6-1-10 .5S4 21 2 19s.5-8-.5-13z" fill="#e4e4e4" stroke="#808080" stroke-width="1.300"/>',
line:'<path d="M3 6l5 14 6-15 8-2" fill="none" stroke="#888" stroke-width="1.400"/><g fill="#fff" stroke="#888"><circle cx="2.500" cy="5.500" r="1.800"/><circle cx="8.500" cy="20" r="1.800"/><circle cx="16" cy="3" r="1.800"/><circle cx="22" cy="3" r="1.800"/></g>',
home:'<path d="M1.500 2.500h8l3 3h10v16h-21z" fill="#efefef" stroke="#777" stroke-width="1.400"/><path d="M6 14l6-5.500 6 5.500M8 13v6h8v-6" fill="none" stroke="#333" stroke-width="1.700"/>',
folder:'<path d="M1.500 2.500h8l3 3h10v16h-21z" fill="#efefef" stroke="#777" stroke-width="1.400"/>',
models:gearPath('#d32f2f',8,8,8)+gearPath('#7a7a7a',18.500,12,5.500)+gearPath('#86aee0',11,19,5),
doc:doc+'<path d="M6 8h11M6 12h11M6 16h11M6 20h8" stroke="#888" stroke-width="1.400"/>',
edit:'<path d="M1 2h17v17H1z" fill="#fbe24c" stroke="#c9a300"/><path d="M11 19L20 5l3 2-9 14-4 2z" fill="#f3d65e" stroke="#8a7a30"/>',
cray:'<path d="M22 7C15 2 4 5 2 11c3 6 9 8 14 9 3 0 5-2 5-4-4 1-8-1-8-4 1-3 6-1 9-2z" fill="#e83441"/><path d="M12 7l10 0-2-2z" fill="#9c1d26"/>',
gdal:'<circle cx="14" cy="13" r="9" fill="#3fb5dd"/><path d="M12 5l8 5-3 6-6-3z" fill="#4caf50"/><path d="M1 6l10-4M6 4l5 4" stroke="#444" stroke-width="2.500"/><text x="0" y="23.500" font-size="11" font-weight="bold" font-family="Liberation Sans,sans-serif" fill="#000" textLength="23" lengthAdjust="spacingAndGlyphs">GDAL</text>',
grass:'<path d="M12 0l10 10-10 9L2 10z" fill="#f6fff6" stroke="#555"/><path d="M12 17V6M12 17L6 8M12 17l6-9M12 17l-8-5M12 17l8-5" stroke="#43a047" stroke-width="1.600"/><path d="M2 14l10 8 10-8M4 23h16" fill="none" stroke="#444" stroke-width="1.300"/>',
qneat:'<text transform="translate(9 24) rotate(-90)" font-size="10.500" font-weight="bold" font-family="Liberation Sans,sans-serif" fill="#000" textLength="24" lengthAdjust="spacingAndGlyphs">QNEAT</text><path d="M12 2h9l-6 8c8-1 9 10 1 11-3 0-4-1-4-2" fill="none" stroke="#111" stroke-width="2.600"/>',
mag:'<circle cx="9.500" cy="9.500" r="7.500" fill="none" stroke="#808080" stroke-width="1.700"/><path d="M15 15l8 8" stroke="#808080" stroke-width="1.900"/>',
gps2:'<g transform="rotate(-28 12 12)" fill="#fff" stroke="#111" stroke-width="1.600"><rect x="3" y="1" width="7" height="20" rx="3"/><rect x="12" y="4" width="7" height="19" rx="3"/><path d="M5 6h3M5 10h3M14 9h3M14 13h3M14 17h3M5 15h3" stroke-width="2"/></g><path d="M17 4l4-3M20 6l3-1" stroke="#111"/>',
lock:'<path d="M6 11V7a6 6 0 0 1 12 0v4" fill="none" stroke="#6a6a6a" stroke-width="2.600"/><rect x="3.500" y="10.500" width="17" height="13" rx="1.500" fill="#646464"/>',
crs:'<circle cx="12" cy="10.500" r="10" fill="#777"/><g fill="none" stroke="#eee" stroke-width="1.100"><ellipse cx="12" cy="10.500" rx="5" ry="10"/><path d="M12 0v21M1 10.500h22M3 5h18M3 16h18"/></g><path d="M6 23h12" stroke="#777" stroke-width="2"/>',
msg:'<path d="M12 1.500c7 0 11.500 3.500 11.500 8.500 0 4-1.500 6-3.500 7.500 0 3 1 4 2.500 5.500-4 .5-6-1-8-3.500-8 1-14-3-14-9.500C.5 5 5 1.500 12 1.500z" fill="#555"/><g fill="#fff"><circle cx="6.500" cy="11" r="1.800"/><circle cx="12" cy="11" r="1.800"/><circle cx="17.500" cy="11" r="1.800"/></g>'
};
const $def=(n,f)=>customElements.define(n,class extends HTMLElement{connectedCallback(){if(!this.shadowRoot){this.attachShadow({mode:'open'}).innerHTML=f(this)}}});
const A=(e,n,d='')=>e.getAttribute(n)??d;
const icon=(n,s=24,cls='')=>`<gis-icon name="${n}" size="${s}" class="${cls}"></gis-icon>`;
const lab=(t,w,c='')=>`<fit-label w="${w}" class="${c}">${t}</fit-label>`;

$def('gis-icon',e=>{const s=A(e,'size',24);return`<style>:host{display:block;flex:none;width:${s}px;height:${s}px}svg{display:block;overflow:visible}</style><svg width="${s}" height="${s}" viewBox="0 0 24 24" fill="none">${ICONS[A(e,'name')]||''}</svg>`});

$def('title-bar',e=>`<style>
:host{display:flex;height:29px;align-items:center;background:linear-gradient(90deg,#f0f4f9,#eff3fb 30%,#eff3fb 70%,#f0f3f8);font-size:14.500px;padding-left:2px;box-sizing:border-box;position:relative}
.hint{position:absolute;left:823px;top:-6px;width:274px;height:6px;box-shadow:0 1px 6px #0002}
fit-label{margin-left:6px}.sp{flex:1}.b{width:58.500px;display:flex;justify-content:center}
</style>${icon('qlogo',20)}${lab('*Ex08_Entin — QGIS',133)}<span class="sp"></span>
<span class="b"><svg width="13" height="13"><path d="M1 6.500h11" stroke="#000" stroke-width="1.200"/></svg></span>
<span class="b"><svg width="13" height="13" fill="none" stroke="#000"><rect x="1" y="3.500" width="8.500" height="9" rx="1.500"/><path d="M3.500 1.500H10q2 0 2 2V10"/></svg></span>
<span class="b" style="margin-right:3px"><svg width="13" height="13"><path d="M1 1l11 11M12 1L1 12" stroke="#000"/></svg></span><i class="hint"></i>`);

$def('menu-bar',e=>{const m=[['Проект',11.500,49.500],['Правка',77,49.500],['Вид',142,26],['Слой',183,34.500],['Настройки',233,74],['Модули',324,52.500],['Вектор',392,47.500],['Растр',455,37.500],['База данных',508.500,87.500],['Интернет',611.500,65.500],['Меш',692,33],['Анализ данных',740,107],['Справка',861.500,58]];let x=0;
return`<style>:host{display:flex;height:25px;box-sizing:border-box;align-items:center;background:#f0f0f0;border-bottom:1px solid #cfcfcf;font-size:14.500px;line-height:24px}</style>`+m.map(([t,l,w])=>{const r=`<fit-label w="${w}" style="margin-left:${l-x}px">${t}</fit-label>`;x=l+w;return r}).join('')});

$def('tool-button',e=>{const d=e.hasAttribute('disabled'),sp=e.hasAttribute('split'),pr=e.hasAttribute('pressed'),mn=e.hasAttribute('menu');return`<style>
:host{display:flex;flex:none;width:${sp?48:33}px;height:38px;align-items:center}
.b{width:31px;height:30px;margin:0 ${sp?'0':'1px'} 0 1px;display:flex;align-items:center;justify-content:center;position:relative;box-sizing:border-box;border:1px solid transparent}
.p{background:#dadada;border-color:#b0b0b0;border-radius:3px}
gis-icon{${d?'filter:grayscale(.75) opacity(.36)':''}}
.a{border:4.500px solid transparent;border-top:6px solid ${d?'#a0a0a0':'#555'};border-bottom:0;margin-left:3px}
.m{position:absolute;right:0;bottom:2px;border:4.500px solid transparent;border-top:6px solid ${d?'#888':'#555'};border-bottom:0}
</style><span class="b ${pr?'p':''}">${icon(A(e,'name'),24)}${mn?'<i class="m"></i>':''}</span>${sp?'<i class="a"></i>':''}`});

$def('bar-handle',e=>`<style>:host{display:flex;flex:none;width:${A(e,'w',18)}px;height:38px;align-items:center;justify-content:flex-end}i{width:5px;height:17px;margin-right:${A(e,'w')?4:4.500}px;background:radial-gradient(circle,#b5b5b5 .7px,transparent 1px) 0 0/3px 3px}</style><i></i>`);
$def('bar-sep',e=>`<style>:host{flex:none;display:flex;width:8px;height:38px;align-items:center;justify-content:center}i{width:1px;height:20px;background:#c9c9c9}</style><i></i>`);

/* boxed input with optional stepper or drop-down */
$def('value-box',e=>{const k=A(e,'kind'),w=A(e,'w'),h=A(e,'h',24),dis=e.hasAttribute('disabled');return`<style>
:host{display:flex;flex:none;box-sizing:border-box;width:${w}px;height:${h}px;border:1px solid #adadad;border-radius:2px;background:${dis?'#f0f0f0':k=='drop'?'linear-gradient(#fff,#ececec)':'#fff'};align-items:stretch;overflow:hidden;color:${dis?'#777':'#000'}}
.t{flex:1;display:flex;align-items:center;padding-left:${A(e,'pad',5)}px;${k=='drop'&&!dis?'background:#fff':''};overflow:hidden;white-space:pre}
.s{width:17px;border-left:1px solid #bcbcbc;display:flex;flex-direction:column;justify-content:space-evenly;align-items:center;background:linear-gradient(#fdfdfd,#ededed)}
.d{${dis?'border-left:0':'border-left:1px solid #ccc'};width:23px;display:flex;align-items:center;justify-content:center}
i{border:4.500px solid transparent}.u{border-bottom:6px solid #777;border-top:0}.n{border-top:6px solid #777;border-bottom:0}
</style><span class="t"><slot></slot></span>${k=='spin'?'<span class="s"><i class="u"></i><i class="n"></i></span>':k=='drop'?'<span class="d"><i class="n"></i></span>':''}`});

$def('tool-bar',e=>{const out=A(e,'items').trim().split(/\s+/).map(t=>{
 if(t=='||')return'<bar-handle w="14.500"></bar-handle>';if(t=='|')return'<bar-handle></bar-handle>';if(t=='/')return'<bar-sep></bar-sep>';
 if(t=='SPIN')return`<value-box kind="spin" w="93" disabled pad="5">${lab('12',14)}</value-box>`;
 if(t=='COMBO')return`<value-box kind="drop" w="117" disabled pad="4" style="margin:0 2px 0 1px">${lab('пикс',26)}</value-box>`;
 const m=t.match(/^(~?)(\w+)([+*^]*)$/);return`<tool-button name="${m[2]}" ${m[1]?'disabled':''} ${m[3].includes('+')?'split':''} ${m[3].includes('*')?'pressed':''} ${m[3].includes('^')?'menu':''}></tool-button>`}).join('');
 return`<style>:host{display:flex;height:39px;box-sizing:border-box;align-items:center;background:linear-gradient(#fafafa,#eee);border-bottom:1px solid #b3b3b3;font-size:13px;overflow:hidden}:host(.last){height:38px}</style>${out}`});

$def('dock-head',e=>`<style>:host{display:flex;height:23px;align-items:center;font-size:14.500px;padding:0 2px 0 4px;box-sizing:border-box}.s{flex:1}svg{margin-left:3px;position:relative;top:-1px}</style><slot></slot><span class="s"></span>
<svg width="11" height="11" fill="none" stroke="#666"><rect x=".5" y=".5" width="10" height="10" rx="2"/><rect x="2.500" y="4.500" width="4" height="4"/><path d="M4.500 4.500v-2h4v4h-2"/></svg><svg width="11" height="11" fill="none" stroke="#666"><rect x=".5" y=".5" width="10" height="10" rx="2"/><path d="M3 3l5 5M8 3L3 8" stroke-width="2"/></svg>`);

/* small icon strip: names with centre positions */
$def('icon-strip',e=>{let x=0;return`<style>:host{display:flex;height:22px;align-items:center}i{border:4.500px solid transparent;border-top:6px solid #555;border-bottom:0;flex:none}u{width:1px;height:12px;background:#c8c8c8;flex:none}.w{position:relative;flex:none}.w i{position:absolute;right:-3px;bottom:0}</style>`+A(e,'items').split(' ').map(t=>{let[n,c]=t.split(':');c=+c;const w=n=='v'?9:n=='/'?1:16,l=c-w/2-x;x=c+w/2;if(n=='v')return`<i style="margin-left:${l}px"></i>`;if(n=='/')return`<u style="margin-left:${l}px"></u>`;const m=n.endsWith('^');n=n.replace('^','');return`<span class="w" style="margin-left:${l}px">${icon(n,16)}${m?'<i></i>':''}</span>`}).join('')});

$def('tree-row',e=>{const lv=+A(e,'indent',0);return`<style>
:host{display:flex;flex:none;height:22px;align-items:center;padding-left:${lv}px;box-sizing:border-box;font-size:14.500px;white-space:nowrap}
:host([hover]){background:#f0f0f0;width:250px}
i{flex:none;border:5px solid transparent;border-left:6px solid #555;border-right:0}
gis-icon{margin:0 ${A(e,'gap',7)}px 0 ${A(e,'lead',13)}px}
</style><i></i>${icon(A(e,'icon'),A(e,'isize',20))}${lab(A(e,'text'),A(e,'w'))}`});

$def('scroll-bar',e=>`<style>:host{display:flex;flex-direction:column;width:17px;flex:none;border-left:1px solid #b8b8b8;box-sizing:border-box;background:#e6e6e6}
.b{height:16px;background:#fafafa;display:flex;align-items:center;justify-content:center}.u{border-bottom:1px solid #b8b8b8}.d{border-top:1px solid #b8b8b8}
.t{height:32px;margin-top:24px;background:linear-gradient(#fff,#f4f4f4);border:1px solid #b8b8b8;border-width:1px 0}.s{flex:1}
i{border:4.500px solid transparent}.u i{border-bottom:5px solid #555;border-top:0}.d i{border-top:5px solid #555;border-bottom:0}</style>
<span class="b u"><i></i></span><span class="t"></span><span class="s"></span><span class="b d"><i></i></span>`);

$def('check-mark',e=>`<style>:host{display:block;flex:none;width:17px;height:17px}svg{display:block}</style><svg width="17" height="17"><rect x=".5" y=".5" width="16" height="16" fill="#fff" stroke="#aaa"/><path d="M4 8.500l3 4.500 5.500-9.500" fill="none" stroke="#000" stroke-width="2"/></svg>`);

$def('layer-row',e=>`<style>:host{display:flex;height:22px;align-items:center;font-weight:bold;font-size:14px;padding-left:29px;box-sizing:border-box}
:host([selected]){background:linear-gradient(90deg,#0078d7 71px,#1883dc 71px);color:#fff;text-decoration:underline}
.s{width:17px;height:17px;margin:0 6px;border:1px solid #7a3d22;background:${A(e,'color')}}</style><check-mark></check-mark><span class="s"></span>${lab(A(e,'text'),A(e,'w'))}`);

$def('browser-dock',e=>`<style>:host{display:flex;flex-direction:column;height:223px;box-sizing:border-box}
icon-strip{margin:1px 0 5px}.box{display:flex;flex:none;height:170px;border:1px solid #b0b0b0;background:#fff;margin-left:-1px;overflow:hidden}.t{flex:1;overflow:hidden;height:170px}</style>
<dock-head>${lab('Браузер',56)}</dock-head><icon-strip items="addbox:16 refresh:41 funnel:66 treeup:91 info:116"></icon-strip>
<div class="box"><div class="t">${[['poly','cadastre_polygon',117],['line','hydrography_line',113.500],['poly','hydrography_polygon',144.500],['poly','q_deposit_polygon',125.500],['poly','reserves_polygon',113.500],['line','roads_line',66.500]].map(([i,t,w])=>`<tree-row indent="41" lead="8" gap="6" icon="${i}" text="${t}" w="${w}" ${t[0]=='q'?'hover':''}></tree-row>`).join('')}
<tree-row indent="7" lead="8" gap="6" icon="home" text="Домашний каталог" w="132.500"></tree-row><tree-row indent="7" lead="8" gap="6" icon="folder" text="C:\\ (OS)" w="50.500"></tree-row></div><scroll-bar></scroll-bar></div>`);

$def('layers-dock',e=>`<style>:host{display:flex;flex-direction:column;flex:1;min-height:0}
.grip{height:6px;display:flex;justify-content:center;align-items:flex-end}.grip b{width:18px;height:3px;background:radial-gradient(circle,#aaa .7px,transparent 1px) 0 0/3px 3px}
icon-strip{margin:1px 0 5px}.box{flex:1;border:1px solid #b0b0b0;background:#fff;margin-left:-1px}</style>
<div class="grip"><b></b></div><dock-head>${lab('Слои',34.500)}</dock-head><icon-strip items="brush:16 addgrp:41 eye^:66 funnel^:91 epsg:117 v:135 treedn:157 treeup:181 rembox:206"></icon-strip>
<div class="box"><layer-row selected color="#8f502d" text="Типы грунта" w="88.500"></layer-row><layer-row color="#c43c39" text="Четвертичные отложения" w="191.500"></layer-row></div>`);

$def('toolbox-dock',e=>{const q='qlogo',L=[['clock','Недавно использованные',183],[q,'Анализ растров',110],[q,'Вектор - Анализ',112.500],[q,'Вектор - Выборка',123],[q,'Вектор - Геометрия',136],[q,'Вектор - Создание',128],[q,'Вектор - Таблица атрибутов',195],[q,'Векторные тайлы',121],[q,'Графики и диаграммы',156],[q,'Инструменты обработки растра',223],[q,'Инструменты пространственных оп...',261],[q,'Интерполяция',102],[q,'Картография',90],[q,'Меш',32],[q,'Общие инструменты векторных дан...',262.500],[q,'Растр - Анализ рельефа',165],[q,'Растр - Создание',118],[q,'Сетевой анализ',109.500],[q,'Слои',34],[q,'Файлы',46],[q,'Database',62],[q,'GPS',25.500],['models','Модели',54],['cray','Crayfish',51],['gdal','GDAL',37],['grass','GRASS',44],['gearp','Interpolate',72],['gearp','qgis2web',63],['qneat','QNEAT3 - Qgis Network Analysis Tool...',259]];
return`<style>:host{display:flex;flex-direction:column;width:328px;flex:none}
icon-strip{margin:1px 0 5px}
.q{height:25px;border:1px solid #a8a8a8;border-radius:3px;background:#fff;display:flex;align-items:center;box-sizing:border-box;padding-left:10px;color:#7a7a7a;font-size:13px;gap:8px}
.l{flex:1;border:1px solid #b0b0b0;background:#fff;overflow:hidden;padding-top:1px;min-height:0}
.m{height:35px;box-sizing:border-box;border:1px solid #2f73b8;background:#54a9ff;color:#fff;font:12.500px "DejaVu Sans Condensed","DejaVu Sans",sans-serif;padding:2px 4px;line-height:16px}
.r{display:flex;height:15.500px}.m a,.m a fit-label{color:#0000ee;text-decoration:underline}</style>
<dock-head>${lab('Инструменты анализа',154.500)}</dock-head><icon-strip items="models^:16.500 python^:42 clock:66 doc:91 /:108 edit:124 /:141 wrench:157"></icon-strip>
<div class="q">${icon('mag',15)}${lab('Поиск...',44.500)}</div><div class="l">${L.map(([i,t,w])=>`<tree-row indent="9" lead="13" gap="8" isize="18" icon="${i}" text="${t}" w="${w}"></tree-row>`).join('')}</div>
<div class="m"><div class="r">${lab('Вы можете добавить алгоритмы в панель,',252)}<a style="margin-left:4px">${lab('разрешив',58)}</a></div><div class="r"><a>${lab('дополнительные источники.',167)}</a><a style="margin-left:12px">${lab('[close]',39)}</a></div></div>`});

$def('status-bar',e=>{const F=(t,w,m)=>`<fit-label w="${w}" style="margin-left:${m}px">${t}</fit-label>`;return`<style>:host{display:flex;height:33px;align-items:center;background:#f0f0f0;font:12.500px "DejaVu Sans Condensed","DejaVu Sans",sans-serif;padding:2px 0 0 4px;box-sizing:border-box}
.q{width:200px;height:25px;border:1px solid #a8a8a8;border-radius:3px;background:#fff;display:flex;align-items:center;box-sizing:border-box;padding-left:9px;gap:9px;color:#777;flex:none}</style>
<span class="q">${icon('mag',15)}${lab('Искать (Ctrl+K)',88)}</span>
${F('Координаты',70,751.500)}<value-box w="114" h="25" pad="6" style="margin-left:3px"><fit-label w="99">283524  6655752</fit-label></value-box>
<gis-icon name="gps2" size="20" style="margin-left:4px"></gis-icon>${F('Масштаб',53,13)}<value-box kind="drop" w="75" h="25" pad="0" style="margin-left:3px"><fit-label w="45">:484409</fit-label></value-box>
<gis-icon name="lock" size="18" style="margin-left:11px"></gis-icon>${F('Увеличение',70,8)}<value-box kind="spin" w="94" h="25" pad="4" style="margin-left:3px">${lab('100%',33)}</value-box>
${F('Поворот',48,8)}<value-box kind="spin" w="89" h="25" pad="4" style="margin-left:10px">${lab('0,0 º',28)}</value-box><check-mark style="margin-left:6px"></check-mark>${F('Отрисовка',61.500,6.500)}
<gis-icon name="crs" size="19" style="margin-left:15px"></gis-icon>${F('EPSG:32636',69.500,3)}<gis-icon name="msg" size="20" style="margin-left:25px"></gis-icon>`});

/* ---------- map geometry: one feature per entry; T = double river line, e = ellipse ---------- */
const OUT='135,582 160,565 185,535 193,520 212,497 232,460 262,424 295,407 307,388 313,400 340,388 352,386 364,398 386,400 388,384 420,375 445,384 465,391 480,386 495,373 545,375 552,369 572,366 578,345 578,334 570,328 553,325 548,314 555,297 550,290 557,275 548,285 535,292 508,300 482,298 485,238 470,240 405,270 365,268 352,268 355,295 320,290 254,279 235,262 240,240 258,215 268,198 276,152 290,142 300,131 325,127 357,102 380,95 388,86 398,66 410,59 445,66 485,59 510,66 522,72 570,80 585,88 620,90 650,83 675,87 717,81 740,90 780,100 790,110 807,106 812,140 817,155 825,168 845,184 870,189 910,187 950,190 1005,198 1073,213 1130,242 1200,268 1250,273 1270,282 1330,284 1350,292 1370,306 1420,315 1490,352 1497,370 1530,382 1570,396 1595,410 1635,427 1715,447 1750,467 1797,520 1835,538 1880,545 1935,543 1965,548 1995,564 2130,575 2300,553 2535,515 2560,517 2573,523 2590,550 2592,565 2588,590 2595,603 2617,605 2660,641 2700,633 2698,655 2745,695 2760,730 2770,735 2805,777 2845,784 2875,802 2923,817 2923,1200 2910,1340 2885,1675 2907,1695 2897,1717 2880,1722 2866,1920 2924,2275 2800,2270 2340,2253 1500,2220 610,2170 43,2141 105,1080';
const NW=`562,318 585,311 607,307 625,293 638,270 657,283 683,280 705,303 730,319 750,315 752,295 738,272 742,254 770,250 802,264 814,290 800,335 795,385 785,412 763,428 748,412 740,385 722,362 680,360 662,343 630,326 636,323 665,335 674,365 690,397 665,412 643,435 650,444 664,432 690,403
580,350 613,344 607,358 580,380 574,403 590,420 612,415 610,428 595,428 583,432 572,455 573,480 590,500 625,512 630,540 627,570 600,595 584,620 595,648 620,650 640,625 657,600 655,583 680,578 710,570 718,555 700,525 655,485 615,460 600,432 620,435 642,440
625,512 640,525 655,550 665,550 660,530 675,535 685,560 710,570
563,300 577,310 575,322 560,328 548,315z
862,280 880,280 884,330 872,385 862,430 845,480 825,498 812,495 825,455 832,400 850,350z
905,190 915,220 935,260 940,295 965,307 985,303 1000,275 998,248 985,242 970,250 955,235 950,205 938,192
1000,203 980,208 965,235 972,248 995,235 1003,215z
1020,212 1035,207 1053,215 1050,227 1030,224z
1070,270 1080,258 1105,250 1120,268 1105,285 1080,287z
1160,262 1190,263 1212,275 1205,283 1170,277z
1235,272 1260,270 1275,282 1297,287 1292,303 1255,300 1237,292z
1180,295 1200,290 1230,300 1260,312 1300,320 1320,345 1315,355 1290,370 1285,398 1262,380 1262,350 1240,325 1200,310z
1210,285 1250,305 1330,322 1360,330 1370,355 1400,385 1430,392 1428,365 1405,350 1393,330 1400,318 1420,315
1530,382 1500,395 1492,430 1485,462 1470,460 1478,420 1480,390 1497,372
892,370 905,362 930,365 932,373 905,377z
960,372 985,365 1000,375 1040,362 1090,348 1100,365 1105,400 1098,412 1090,395 1095,370 1083,372 1080,405 1105,460
960,372 957,390 985,395 1010,410 1018,440 1020,475 1000,500 955,522 950,540 900,543 885,520 885,490 870,465 855,460 858,432
858,432 890,435 893,395 912,410 925,433 910,425 932,435 965,457 975,430 990,422 1010,432
1045,338 1052,338 1053,357 1045,352z
1045,435 1050,408 1065,402 1075,430 1080,437 1060,440z
1068,495 1066,470 1080,462 1125,465 1160,495 1165,530 1130,515 1085,500z
1165,490 1180,470 1200,475 1212,460 1208,440 1207,410 1225,398 1247,405 1245,435 1243,450 1255,470 1265,462 1287,475 1288,515 1320,500 1325,480 1360,473 1395,480 1450,475 1500,472
1258,510 1280,508 1290,530 1288,575 1275,580 1257,560z
1225,485 1228,470 1235,465 1237,480z
1165,490 1170,520 1173,553 1155,525 1165,480
900,543 945,542 938,580 965,610 970,637 1010,648 1048,635 1055,660 1085,667 1135,655 1160,655 1185,652 1165,625 1180,600 1178,580 1155,575 1135,560 1110,565 1090,540 1085,510 1065,500 1030,520 1010,535 1010,555 1030,555 1060,560 1100,590 1115,605 1125,630 1150,655 1160,680 1190,710 1200,740 1180,755 1150,770 1125,802 1113,790 1120,775 1160,765 1158,730 1150,720 1060,716 1025,722 950,710 900,678 815,682 780,700 755,715 715,705 695,718 660,710 630,714 605,700 590,700 560,735 490,740 475,752 500,765 480,772 385,767 350,775 290,785 250,805 200,820 165,855 148,895 118,925
945,542 970,535 1000,520 1010,540 980,555 960,575 975,580 970,605 945,597
1000,575 1007,595 1000,612 990,600z
1085,635 1098,627 1108,640 1090,643z
1020,492 1030,488 1035,505 1022,512z
815,560 820,535 840,528 860,545 865,570 860,590 865,605 835,610 815,600z
860,550 900,548 925,590 935,615 925,628 905,625 908,637 895,625 885,610 868,600
705,490 740,475 775,480 780,490 800,490 800,510 790,500 775,490 740,500 740,520 765,540 778,560 775,595 755,612 715,608 708,590 715,560 705,520z
T800,490 796,515
T793,522 790,545
T788,555 786,570
T787,585 790,605 805,625 820,632
T830,632 860,637
T897,653 905,657
T922,660 928,660
T945,654 952,654
T965,660 1000,675 1023,703
T1060,718 1110,714
323,432 312,437 298,470 297,510 318,580 312,655 325,710 360,727 385,700 400,697 405,710 418,712
323,432 320,500 320,530 325,545 335,552
345,440 360,437 380,455 380,515 400,560 415,585 445,585 460,570 440,540 413,510 415,495 440,492 470,515 485,560 480,583 460,597 425,640 420,680 445,710 450,725 430,735
345,440 360,460 362,500 352,550 340,545 335,530 322,535 325,550
350,455 378,460
500,535 540,540 563,570 527,583 515,560z
467,593 495,588 520,595 525,605 550,630 520,640 510,615 480,600z
430,658 450,630 480,623 485,638 455,665 430,673z
345,625 355,620 362,633 350,640z
490,690 510,677 545,680 553,695 540,710 495,710z
505,675 510,660 540,662 570,675 625,662 633,670 610,695 553,697
665,710 680,690 710,683 750,683 758,700 750,712
T160,600 200,622 225,630 232,650 262,670
T262,683 290,713 325,716
T400,700 440,745 465,758
T325,716 360,727
165,685 190,680 203,705 195,720 175,740 163,735z
172,700 190,693 187,715 172,712z
125,810 145,765 180,740 205,722 215,735 195,770 170,785 150,830 118,865
T548,800 555,830 563,878
T583,895 583,920
675,812 693,825 678,835z
620,860 640,838 660,835 660,855 640,865z
735,865 745,868 735,895 725,915 700,930 670,962 665,955 685,930 715,915 725,880z
770,870 780,862 790,870 778,878z
805,852 813,850 808,858z
797,880 815,880 818,900 808,930 838,965 820,962 780,985 745,988 770,965 785,935 798,925 790,895z
880,912 910,907 910,990 895,980 877,950z
985,957 1020,962 1050,970 1100,963 1103,985 1085,1000 1045,993 1010,982z
1075,880 1090,877 1097,895 1085,915 1075,905z
1110,910 1120,908 1117,932 1108,928z
e1120 985 9 11
1155,855 1130,880 1125,910 1140,960 1143,1010 1165,1045 1190,1095 1205,1090 1212,1065 1195,1030 1200,985 1190,930 1180,895 1165,885 1165,860z
1180,890 1210,893 1243,913 1240,920 1200,910z
1240,937 1225,940 1215,980 1197,1023 1225,1000 1238,1002 1232,965z
1218,830 1257,832 1250,845 1225,845z
1295,795 1300,765 1330,740 1370,722 1373,735 1350,760 1320,785 1310,797z
260,900 285,878 297,890 280,940 255,988 237,985 240,940z
300,930 325,935 340,912 365,920 372,935 350,950 355,975 340,992 320,990 297,955z
340,992 400,963 415,978 390,1010 355,1025 340,1045 310,1025 308,995
437,860 450,875 490,887 500,910 470,905 440,900z
437,920 465,918 490,930 495,950 460,945 437,935z
430,985 460,960 500,975 515,1000 480,1005 445,998z
e540 937 8 10
565,975 580,990 568,1007 557,995z
520,1010 545,1015 558,1033 530,1030z
450,1050 465,1027 483,1045 475,1070 455,1075z
e425 1015 5 11
e380 877 6 9
e355 870 9 6
400,1080 412,1055 427,1080 420,1103 405,1100z
e605 1053 9 9
642,1067 672,1065 670,1085 655,1088z
e133 1033 20 12
1350,600 1375,587 1405,590 1425,615 1460,660 1510,707 1510,735 1520,770 1540,805 1550,817
1350,600 1352,640 1365,668 1392,662 1385,680 1367,690 1370,705 1405,730 1395,757 1355,780 1347,810 1380,820 1395,785 1378,780 1375,800 1400,830 1413,800 1412,775 1435,795 1490,800 1505,835 1475,847 1513,877 1470,880 1440,870 1400,875 1388,890 1405,915
1355,815 1352,840 1338,855 1355,880 1388,885
1400,875 1440,853 1470,865 1470,880
1513,877 1530,876
e1397 922 10 10
1420,535 1450,545 1462,625 1505,662 1485,660 1440,625 1420,600z
e1320 523 8 9
e1353 549 6 8
e1422 517 8 6
e1448 498 9 6
e1480 506 8 6
e1202 350 13 14
e1214 550 9 11
e1185 515 4 8
e1260 595 9 5
e1276 626 17 9
e1256 668 12 8
1465,545 1485,545 1520,565 1510,580 1490,570z
e1493 688 11 8
1393,565 1400,560 1420,605 1405,600z
1395,938 1412,945 1400,990 1383,1040 1390,1110 1355,1110 1350,1095 1363,1070 1342,1020 1365,975z
1427,1065 1440,1045 1485,1042 1502,1075 1500,1100 1475,1127 1420,1120 1425,1105 1460,1090 1450,1075 1432,1085z
1045,725 1055,728 1055,748 1043,745z
1105,770 1115,758 1120,768z
518,722 535,715 530,727z
697,1075 715,1063 760,1075 800,1105 845,1100 880,1085 895,1055 912,1075 915,1100 940,1130 920,1160 905,1135 870,1150 840,1150 790,1148 743,1130 755,1105 720,1090z
T885,1055 900,1075`;
const SW=`103,118 130,135 145,118 230,118 245,90 270,65 272,95 250,175 225,210 195,213 170,180
T103,118 140,155 175,193
170,105 190,90 195,65 210,58 220,75 233,115
320,75 330,60 355,58 367,75 345,85z
443,67 460,68 495,98 480,97 450,82z
688,75 700,75 693,97 685,92z
e487 153 8 12
275,150 278,130 285,125 292,118 300,120 310,112 325,117 340,118 347,130 350,145 340,160 335,170 320,172 300,175 305,190 308,208 290,195 285,180 270,168z
e358 155 12 12
525,130 540,125 550,155 600,145 640,150 665,170 655,190 600,185 555,183 530,165z
630,122 645,128 660,125 668,140 650,150 640,135z
668,150 685,142 695,115 705,118 700,148 680,155z
e562 251 31 15 -35
e728 239 7 9
e416 278 8 10
e395 35 8 18 -25
e415 12 10 14
92,213 115,212 135,240 125,265 97,245z
95,295 115,283 133,320 100,328z
140,320 175,290 187,322 165,332z
315,238 343,245 330,260z
333,310 350,290 370,315z
e383 343 21 13 -10
262,305 275,295 258,275 258,250 275,240 285,260 300,280 310,305 328,325 300,345 285,365 300,385 265,385 250,390 265,405 245,410 235,400 212,400 200,395 180,420 150,418 135,400 140,380 180,360 215,340 220,320 255,315z
180,425 175,450 190,457 200,440 197,395
203,410 215,445 235,457 240,440 220,405 205,400z
110,425 128,422 130,450 112,485 102,485z
737,290 755,268 800,268 830,285 838,315 830,350 812,350 800,310 785,290 765,305 745,315z
480,352 550,350 585,333 597,350 560,358 520,358 480,365z
e485 378 11 7
597,345 620,355 660,370 640,367 635,377 620,375 600,355z
630,375 655,357 677,370 655,410 655,432 635,437 625,420z
460,460 465,425 495,398 530,398 555,418 555,430 520,432 490,465z
423,425 455,422 450,460 440,460z
T722,402 760,406 790,417
797,408 815,405 852,445 845,460 815,465 795,497 775,495 775,480 800,460 812,440z
T1020,503 1060,508 1090,530 1120,525 1160,545
T1100,478 1125,480 1175,502
425,540 430,515 480,490 520,490 525,515 500,540 485,570 445,577z
508,540 595,578 560,582 520,565z
T508,542 560,568 598,578
e678 540 7 13
e318 480 9 13
e217 530 22 14
255,490 255,502
270,635 283,616
200,620 210,595 250,568 262,575 255,590 220,610 200,640z
175,640 205,625 205,650 185,675z
190,670 185,710 150,745 137,777 150,720 175,665
e147 686 10 17
243,625 262,625 260,650 277,685 250,670z
e368 592 7 12
470,595 487,592 480,625 463,625z
e511 640 9 20
580,595 603,595 600,625 580,620z
615,587 630,615 615,618z
475,700 533,673 530,680 480,703z
e583 711 8 12
380,660 400,660 433,705 415,713 383,690z
e305 676 5 8
325,705 340,697 370,730 365,770 345,795 285,795 272,778 285,767 340,770 345,745z
e209 775 18 14
547,775 600,765 645,748 640,772 600,787 555,792z
e707 684 17 14
e769 677 15 11
775,780 815,757 823,765 795,787z
850,600 870,592 895,615 897,685 875,688 870,640z
835,622 855,645 845,640z
e989 592 17 20
72,830 90,793 125,790 120,815 85,850z
135,803 150,803 200,855 195,885 160,870z
230,935 235,880 270,848 330,860 350,885 380,920 380,935 400,940 415,945 435,960 425,970 430,990 395,990 370,995 385,975 365,965 360,975 340,967 310,977 280,945z
T370,970 400,965 425,970
370,990 370,1030 380,1065 395,1080
430,985 440,1030 480,1070 510,1060 512,1020 475,960 472,940 485,885 500,877 517,885 520,940 555,985 597,992 605,1040 613,1090
597,992 620,975 650,970 660,1020 680,1055 660,1045 645,1030 630,1040 620,1020 605,1045
e422 879 19 17
e396 887 8 8
e447 901 8 8
350,835 378,835 372,860 355,857z
e363 884 8 8
T532,866 580,862 618,842
618,885 640,885 650,870 645,895 625,905z
60,853 75,853 130,895 160,960 183,1045 175,1062 150,1000 120,955 110,935 125,925 100,925 95,990 75,1003 68,980 75,910 63,880z
e58 965 8 22
175,925 200,922 215,970 205,1005 180,985z
225,945 265,975 290,1010 333,1045 310,1070 290,1060 270,1010 230,965z
190,1040 240,1030 265,1005 270,1050 245,1068 195,1060z
200,1005 235,1015 215,1035z
928,130 945,122 1040,118 1063,112 1063,130 1000,155 945,168 932,150z
1060,112 1075,88 1083,110z
1095,75 1115,62 1138,82 1115,97z
800,68 840,65 838,98 815,90z
T800,72 835,100
T808,105 835,98
810,110 830,115 860,125 845,130z
855,75 885,78 885,100 865,108 853,95z
T950,165 1000,147 1060,130 1130,133 1160,185 1210,190 1235,210 1235,235
1000,155 1005,180 1025,205 1025,260 1045,285 1090,285 1097,230 1130,200 1175,193
975,168 978,205 960,222 915,232 870,265 858,285 885,288 920,275 960,262 990,230 998,235 998,310 1010,325 1075,327 1100,350 1097,385 1070,400 1015,415 1015,455 1050,490 1090,500 1125,485 1175,503 1182,485 1150,400 1160,365 1210,320 1290,265 1305,240
T1187,237 1305,240 1365,222 1400,245 1455,245 1480,280 1517,310
e1220 215 11 20
1245,230 1250,200 1270,197 1280,233
e1077 375 9 20 -40
e1191 130 22 16
1330,218 1322,150 1345,120 1378,122 1360,155 1367,218
e1413 149 8 18 -15
1435,175 1445,150 1460,145 1463,122 1467,140 1473,145 1460,165 1438,180z
e1394 193 9 12
e1262 50 17 22
e1231 22 7 12
e1366 15 21 25
e1195 5 15 14
1370,60 1408,48 1410,70 1395,100z
e1418 70 8 11
e1542 120 7 12
e1360 88 9 8
1310,295 1335,290 1345,325 1365,345 1420,365 1438,390 1430,405 1390,385 1350,345 1315,320z
T1340,315 1363,328
1335,370 1350,378 1370,370 1375,390 1360,398z
1195,385 1255,382 1260,392 1275,388 1300,357 1318,365 1315,410 1300,470 1330,480 1345,440 1380,430 1410,405 1440,408 1450,375 1475,368 1510,370 1530,380 1530,440 1510,450 1480,442 1440,460 1420,490 1405,488 1385,520 1375,510 1310,520 1268,515 1268,480 1300,470
1195,385 1197,410 1270,412 1290,430 1285,450 1260,470 1248,520 1225,545 1215,590 1190,640 1185,695 1150,740 1115,787 1070,780 1015,768 1015,750 1045,718 1035,708 1015,715 1003,750 975,740 950,733 945,750 990,790 1045,810 1085,840 1165,830 1180,855 1170,890 1185,910 1200,957 1215,915 1230,895 1290,885 1305,855 1275,820 1278,795 1305,780 1265,765 1235,730 1235,685 1255,660 1250,625 1300,585 1317,520
1270,488 1305,488 1305,515
1480,395 1510,395 1510,365 1530,375 1505,430 1475,430 1490,410z
1110,955 1190,952 1248,1000 1240,1020 1215,1040 1177,1073 1150,1055 1110,1035z
e1033 965 9 8
e1060 908 8 8
e1054 957 7 8
1035,915 1050,910 1065,935 1050,925z
e938 886 6 13
e935 965 9 20 -30
e1015 1068 18 13 35
955,1025 983,1045 960,1047z
e762 1025 6 12
e851 1025 8 11
818,1090 830,1045 840,1055 845,1080 850,1060 860,1080 880,1085 880,1103
903,1103 915,1080 930,1095 925,1107
1290,940 1310,938 1365,965 1377,988 1340,985 1295,960z
1275,1040 1280,1010 1310,990 1318,1005 1290,1025z
e1356 1013 15 15
1325,820 1355,810 1365,830 1335,843z
1295,790 1325,785 1325,805 1305,807z
T1320,665 1322,640 1377,645
e1438 605 20 6 -30
e1468 647 8 12
1430,700 1450,692 1480,690 1520,690 1525,705 1505,735 1460,745 1427,730z
1385,820 1400,800 1385,772 1430,800 1445,757 1470,757 1475,780 1460,810 1480,850 1490,885 1495,985 1480,970 1465,900 1425,855 1405,855z
T1465,785 1485,790
1485,740 1510,735 1500,760 1495,790 1510,820 1520,860
1405,920 1438,912 1420,930 1408,935z
1415,985 1440,980 1455,1020 1480,1055 1465,1063 1435,1040 1410,1030z
1370,1050 1390,1040 1400,1060 1415,1110 1435,1130
1370,1050 1375,1090 1410,1130
1475,1115 1470,1080 1500,1080 1530,1120 1520,1135
e1320 1105 7 18
e1497 1058 12 13
e1538 950 14 15
1510,1015 1530,1020 1555,1010 1540,1040 1525,1060 1560,1095
1538,370 1560,375
1538,400 1560,405`;
const SE=`T860,100 905,107 935,75 950,40 953,0
T932,130 1000,120 1030,95 1080,78 1105,90 1135,122 1165,108 1200,75
T1213,65 1220,90 1217,165
T1220,90 1270,88 1300,105 1307,165
450,120 445,50 470,20 487,30 485,55 515,70 490,100 480,120 515,135 505,148 460,140 413,130 425,90 445,88
530,0 545,30 530,65 548,110 555,180
565,0 585,50 600,80 630,125 610,150 605,175 580,180
550,125 575,105 605,90
T437,180 500,180 560,188 605,178 612,150
555,125 605,150
620,10 640,-20 680,-25 655,25 635,60 620,45z
e718 18 12 18
680,65 715,65 745,70 745,100 725,105 710,90 697,105 690,145 680,155 668,140 680,110z
e687 122 8 13
790,22 805,12 817,35 803,25 795,30z
765,130 775,90 815,70 820,55 865,25 880,30 895,62 930,40 945,0
765,130 772,190
640,185 645,158 680,160 720,170 720,200 735,195 755,210 780,222 760,230 720,235 650,205z
775,185 840,140 872,128 870,155 825,190 800,210z
T640,175 650,205
T720,230 760,230 800,215 820,200 850,190 880,190
e868 180 14 13
885,110 900,125 930,120
688,230 690,250 710,262 745,248 740,270 700,315 690,290 665,312 665,290 690,262
745,285 780,275 800,300 825,305 850,275 890,262 930,250 965,215 955,185 940,182 890,262
815,215 820,260 800,290
845,205 880,200 888,260
850,270 835,225 850,200
745,285 710,310 695,330
930,245 960,235 1000,217 1010,225 1005,268 985,258 935,250
1020,140 1040,160 1030,195 1010,190z
T905,165 920,135
e1029 28 10 12
1115,-30 1110,45 1090,60 1095,100
1090,95 1095,150 1130,170 1165,150 1180,180 1210,180
1295,30 1310,28 1323,80 1308,90 1300,60z
1323,65 1345,75 1350,40 1375,68 1420,65
1365,160 1370,100 1400,85 1412,95
1395,110 1412,135 1400,165 1370,182
1320,150 1335,125 1355,130 1362,180 1345,200 1322,180z
1235,120 1290,115 1305,105
1235,120 1235,150 1255,180 1240,190 1222,180
1080,230 1132,210 1125,225 1105,245 1100,290 1105,322 1130,330 1140,410 1125,425 1135,440 1145,430 1148,470 1130,525 1080,545 1010,555 1015,567 1030,572 1033,590 1055,600 1055,690 1035,695 1030,760 1055,840 1068,910 1065,990 1085,1055
1080,230 1085,320 1055,305 1050,325 1010,355 960,410 958,455 1005,500 1020,480 1015,450 1035,450 1040,470 1025,490 1035,535 1080,520 1130,500 1145,490
e1171 241 9 8
1220,240 1243,222 1240,250 1218,257z
e1345 247 12 9
1393,380 1345,370 1290,378 1240,380 1235,415 1225,395 1190,392 1160,430 1148,490
503,250 515,230 545,228 548,290 565,350 555,390 550,440 535,465 527,460 525,400 505,350 510,260z
595,218 618,232 612,265 620,290 615,320 590,310 600,270z
612,265 620,310
e597 348 9 10
657,212 657,275 640,300 640,340 615,360 630,385 635,430 632,475 605,475 600,420 580,425 550,450 535,467 490,475 500,500 500,560 520,580 520,600
555,390 590,380 615,395 600,420
675,360 695,330 712,345 705,370 685,412 675,385z
e592 486 9 13
605,480 615,515 650,517 670,480 685,453 700,470 720,530 720,595
800,375 810,335 840,330 870,312 895,320 893,370 860,375 855,415 820,438 800,430z
790,515 830,525 875,525 865,540 820,537 795,530z
375,395 385,380 412,385 412,420 395,428z
440,425 470,415 500,440 480,455 480,480 460,475z
405,290 420,290 445,327 430,320z
T320,133 370,150 405,170 405,195
270,110 285,108 325,130 310,137z
T283,220 335,235 378,220
378,220 375,190 385,170 400,180 408,225 430,240 415,268 395,255z
120,265 145,265 170,240 172,262 150,285 173,295 125,285z
T122,292 160,318
132,360 170,340 225,322 235,300 220,325 230,345 215,375 215,400 190,405 200,390 175,375 150,378z
T175,342 215,328
e222 424 9 7
e183 490 14 18
e206 541 16 20
e115 482 3 2
e42 30 7 12
T173,22 218,65
215,40 243,25 240,52z
e198 12 12 5 -35
20,245 25,210 45,190 62,157 60,195 38,245z
10,275 35,275 30,320 25,360 0,355
50,280 65,285 70,315 55,320z
33,365 60,375 88,388 40,392z
365,470 385,447 405,455 410,500 428,512 410,530 410,570 385,600 415,605 410,640 395,635 370,600 340,605 330,595 335,570 355,570 360,590
365,470 375,485 395,495 395,530 375,560 355,565
310,625 330,612 345,620 335,632z
e308 656 8 20 10
e470 630 42 26 -45
T20,960 50,930 100,870
T250,725 280,712 330,695 380,682 420,690 470,668 510,635 540,590 575,548 610,555 630,548 660,567
45,940 110,880
e402 690 9 8
e310 710 40 8 -8
125,890 185,820 245,770 260,730
240,732 220,735 160,790 130,840 60,915 25,960 30,990 80,1015 210,1020 270,1040 340,1035 420,1050
575,550 560,590 545,610 500,660
585,600 620,570 655,570
T675,585 715,610
T735,635 770,672
770,672 720,700 705,715 685,690 680,658 650,660 635,695 630,770 620,800 600,750 615,690 605,650 610,615 655,570
545,510 570,505 585,535 570,540 545,520z
565,605 605,625 600,645 570,635z
e665 635 15 14
550,600 548,670 520,705 490,730 495,770 485,810 455,805 440,760 440,710 470,730 490,715 480,700 455,710 465,675
e733 724 9 13
820,640 835,640 853,675
820,640 820,665 830,680
T812,685 870,685 890,725 925,755 945,795 970,805 968,835
862,700 870,730 920,775 937,820 925,870 900,925
780,710 805,698 840,710 860,690
780,710 803,745 785,780 800,800
T700,960 705,860 735,825 800,800 880,805 885,850
895,680 905,650 955,630 1000,585 1010,600 1040,605 1042,640 1010,690 980,740 960,738 925,715 905,700z
1060,645 1100,640 1145,645 1150,675 1120,695 1118,740 1165,760 1195,755 1195,740 1160,745
1058,650 1080,660
1065,655 1070,690 1090,700 1092,760 1075,800 1072,860 1112,908 1150,850 1200,785 1210,770 1190,800 1190,830 1210,830 1240,800 1290,800 1265,850 1275,890 1295,895 1330,850 1338,860 1310,905 1308,940
1160,740 1180,690 1190,630 1220,600 1280,605 1285,615 1250,620 1240,680 1255,710 1300,725 1350,725 1365,745
1285,620 1285,585 1335,575 1335,525 1355,540 1365,518 1370,550 1385,552
1310,500 1265,475 1215,505 1210,535 1230,555 1255,548 1305,560 1310,500 1320,485 1330,495
1180,495 1200,483 1218,487 1200,515 1182,515z
1165,585 1165,525 1188,530 1185,560z
1165,600 1185,575 1212,595 1195,630 1168,615z
1285,620 1285,655 1340,690 1370,685
1305,610 1330,605 1365,640 1340,675 1320,650z
T1320,615 1345,675
240,780 250,750 300,720 260,725
240,780 310,798 355,770 385,730 397,740 395,800 360,830 325,840 330,860 365,880 350,898 310,880 275,890
140,735 155,722 175,745 160,762 138,748z
e87 690 18 13
0,592 25,600 15,630 25,660 75,650 40,720 30,750 60,765 65,790 25,795 22,760 0,740
e48 750 12 14
105,780 130,780 150,800 130,840 108,820z
T125,785 128,810
165,850 200,815 215,850 200,875 180,875 165,860z
25,850 50,860 40,875z
e95 865 12 22 45
e72 880 9 7
e30 925 20 9
e2 970 8 12
250,890 272,890 275,930 262,940 248,925z
e240 915 10 18
e252 960 16 20
275,935 320,950 370,955 360,1000 365,1025 420,1040 420,1065
T350,955 375,958
T380,975 425,1002
T455,1013 472,1025
e268 1016 19 8
e320 1002 11 16 30
e513 942 24 19
40,945 60,970 125,960 145,930 145,910 110,905 70,935
110,1052 120,1040 200,1045 350,1050 395,1050 395,1062
205,1045 205,1058
0,1000 30,1030 25,1048
80,1015 70,1050
35,950 70,990 110,1000
435,1065 470,1030 515,1015 540,1040 605,1045 605,1075
T605,1050 650,1025 670,995 700,980 700,960
480,1030 515,1015
515,1068 520,1040 565,1030
540,780 560,760 555,740 570,745 575,770 605,765 605,800 585,850 575,840 590,800 550,790 535,830 570,855 575,880 640,890 650,880 690,905
640,855 635,800 650,760 690,740 695,860 680,863 650,860z
650,760 670,735 690,740
610,790 640,860
555,900 600,905 605,930 625,955 655,955 690,985 640,1000 625,1020 595,985 590,1017 545,1010 550,980 580,960 550,935z
610,915 650,900 690,905 640,930 640,955z
720,965 745,965 755,1000 745,1030 745,1075
735,880 710,960 705,965
720,850 725,930 745,885 735,880
770,845 800,850 830,865 830,895 770,935 780,965 815,950 830,970 840,1010 838,1083
840,980 870,945 940,960
e855 833 14 8 -30
e845 920 7 22
T877,875 865,900 870,925
T872,940 905,940 945,965 930,1010 958,1088
T972,855 980,945 950,950
e945 872 12 15
e1002 878 9 20 30
970,970 995,970 1000,1000 1000,1030 975,1010z
1010,1020 1030,955 1055,970 1060,1080 1010,1055 965,1050 970,1035 1000,1035
1085,1055 1130,1055 1150,1070 1155,1090
1135,935 1155,935 1160,980 1180,1010 1155,1050 1140,1030 1115,1000 1140,990 1125,960z
T1140,945 1155,980
1165,1090 1200,1065 1240,1035 1250,1010 1265,1040 1290,1075 1290,1100
1195,1025 1215,1020 1225,1045 1245,1095
1340,910 1362,905 1368,940 1345,980 1310,985 1325,960 1318,935z
1325,930 1345,945 1340,925
1310,985 1385,980 1380,1000 1290,1010 1310,1035 1380,1050 1422,1100
1340,1100 1345,1055 1370,1050 1395,1075 1422,1100
e1365 1085 16 14
e702 1017 7 12
665,1075 695,1045 695,1075
745,1075 800,1062 838,1065`;
const NE=`0,320 30,325 35,335 22,345 45,370 62,372 55,378 25,378 30,400 80,405 88,383 95,410 150,450 210,505 213,530 195,542 165,505 120,460 75,445 50,445 48,470 62,500 75,470 80,505 150,550 130,590 128,608 150,595 170,610 172,635 190,643 265,625 305,632 315,655 345,665 415,648 450,625 500,633 560,650 610,640 635,625 660,632 700,625 750,632 850,685 905,735 930,810 950,860 955,930 955,1010 930,1110
115,290 125,310 122,360 158,415 155,395 138,380 145,345 180,345 200,335 208,365 185,400 190,432 215,420 235,365 218,340 213,297
115,290 130,290 135,277
245,335 265,335 275,365 275,420 255,440 200,440 190,432
228,365 245,385 268,400 262,420 240,425 235,405 255,395
245,335 250,355 270,370
255,470 260,435 300,418 340,420 335,445 290,470z
340,420 410,443 420,405 435,393
340,445 420,525 455,515 480,510 490,480 505,455 500,440 475,445 465,470 480,490 445,480 440,495 400,468 392,475 415,520
420,560 450,530 455,515 500,530 540,510 575,510 600,540 625,550 638,520 645,490 690,475 725,458 722,490 712,510 750,505 775,515 775,540 800,525 840,480 890,458 910,465 905,485 870,487 840,520 820,550 860,560 930,610 925,630 895,620 840,570 815,575 810,600 840,620 905,650 905,670 870,655 805,625 795,630 770,595 740,600 715,590 690,562 672,580 670,610 650,608 615,590 570,592 500,585 450,577 425,580z
e657 460 13 17
950,480 965,468 1010,458 1015,470 980,480 955,490z
940,530 1000,525 1020,560 1022,590 1005,610 970,605 945,580 935,550z
955,530 955,555 968,600
1022,655 1035,635 1055,645 1040,670 1025,670z
e1183 660 15 13
e1220 715 12 15
e1130 745 11 15 30
T1250,752 1253,768
T1255,632 1245,650 1250,670
e1245 693 4 4
T1153,523 1150,560 1120,610 1127,660 1105,745 1065,810 1050,835 1050,870 1030,905 1020,945 960,1005 950,1040 940,1110
960,985 990,980
1217,530 1220,560 1232,580 1200,600 1210,640 1250,650 1268,715 1287,720 1285,680 1270,640 1270,590
1423,667 1375,715 1370,755 1345,755 1310,720 1297,722 1305,770 1270,840 1270,890 1245,925 1215,945
905,670 910,695 960,745 1005,758 1075,713 1100,745
975,800 990,780 1050,770 1080,787 1130,790 1135,835 1150,835 1165,815 1155,795 1180,775 1210,805 1235,830 1235,880 1215,910 1200,910
975,800 985,830 1020,835 1050,830
1090,925 1130,920 1145,895 1160,915 1190,915 1185,925 1110,943 1090,935z
1130,860 1165,855 1160,880 1130,880z
1115,945 1095,1005 1060,985 1010,1010 955,1060
1140,945 1140,970 1165,1000
T1180,950 1195,990 1213,1040
1185,945 1215,945
T1260,850 1240,900 1205,920
1213,1040 1250,1000 1320,965 1370,970 1380,950 1423,950
1215,1000 1210,965 1260,947 1300,960
1105,1050 1120,1005 1165,1000 1210,1035
T1210,1045 1213,1065
e1358 1012 18 15
1423,765 1405,770 1400,800 1410,830 1395,865 1423,870
1423,990 1410,1010 1423,1045
650,670 655,635 665,680 690,675 695,650 715,650 712,670 680,710 670,750 640,800 645,835 670,840 690,785 720,780 750,815 800,820 830,835 880,837 930,880 955,910
795,680 800,660 860,705 875,735 850,775 827,765 825,710z
370,770 380,745 410,738 410,765 390,785z
198,775 215,765 243,772 243,790 215,795z
e200 832 43 21
513,825 525,825 545,862 515,855z
500,915 560,875 590,840 607,850 610,880 570,895 535,930z
e480 905 15 19
480,940 505,940 510,960 535,990 520,997 490,970 475,965z
455,1005 525,1008 525,1022 455,1022z
e561 970 10 8
655,872 670,875 665,905 645,940 635,1005 605,1010 620,985 630,920 655,900z
735,940 765,910 780,930 770,965 740,1015 728,1010z
33,752 65,765 85,755 107,740 113,752 132,765 130,783 115,778 90,785 90,798 122,805 130,820 140,828 138,860 115,862 105,885
33,752 33,800 31,870 33,950 50,945 90,960
45,885 60,880 105,883 123,903 90,935 85,950 70,948 40,930z
58,818 70,830 84,820 78,838 60,835z
e85 998 23 12
e134 961 12 8
e163 960 10 11
72,970 85,958 88,972z
e97 552 9 6
e153 527 14 12
225,495 250,490 268,505 255,525 235,528 223,515z
e264 568 9 17 -15
330,505 345,515 385,525 403,550 370,540 325,535z
e334 552 10 6
e10 420 12 11
5,465 45,465 48,490 30,505 10,490z
18,590 28,595 38,640 52,670 30,645 20,615z
42,600 56,595 60,620 45,622z
45,635 62,635 64,665 55,670
18,680 40,685 60,675 60,690 73,695 60,703 45,725 40,742 25,710z
50,715 75,708 55,722z
e5 717 11 8
e3 680 4 6`;
const smooth=(pts,closed,k=.16)=>{const n=pts.length,g=i=>closed?pts[(i+n)%n]:pts[Math.max(0,Math.min(n-1,i))];let d=`M${pts[0]}`;for(let i=0;i<(closed?n:n-1);i++){const a=g(i-1),b=g(i),c=g(i+1),e=g(i+2);d+=`C${(b[0]+(c[0]-a[0])*k).toFixed(1)} ${(b[1]+(c[1]-a[1])*k).toFixed(1)} ${(c[0]-(e[0]-b[0])*k).toFixed(1)} ${(c[1]-(e[1]-b[1])*k).toFixed(1)} ${c}`}return d+(closed?'Z':'')};
const P=s=>s.trim().split(/\s+/).map(p=>p.split(',').map(Number));
const feature=s=>{s=s.trim();if(s[0]=='e'){const[x,y,a,b,r=0]=s.slice(1).split(' ').map(Number);return`<ellipse cx="${x}" cy="${y}" rx="${a}" ry="${b}" transform="rotate(${r} ${x} ${y})"/>`}
 if(s[0]=='T'){const d=smooth(P(s.slice(1)));return`<path d="${d}" stroke-width="8.500"/><path d="${d}" stroke="#91522d" stroke-width="2.800"/>`}
 const z=s.endsWith('z');return`<path d="${smooth(P(s.replace('z','')),z)}"/>`};
$def('map-canvas',e=>`<style>:host{display:block;flex:1;border:1px solid #b4b4b4;background:#fff;box-sizing:border-box;margin:1px 0 0;min-width:0;overflow:hidden}svg{display:block}</style>
<svg width="1080" height="776" viewBox="-135 3 3240 2328" fill="none" stroke="#232323" stroke-width="3.500" stroke-linejoin="round"><path d="M${P(OUT).join('L')}Z" fill="#91522d" stroke-width="3.800"/>
${[[NW,0,0],[SW,0,1080],[SE,1500,1170],[NE,1500,150]].map(([t,x,y])=>`<g transform="translate(${x} ${y})">${t.split('\n').map(feature).join('')}</g>`).join('')}</svg>`);

$def('app-window',e=>`<style>:host{display:flex;flex-direction:column;width:1920px;height:1020px;background:#f0f0f0;overflow:hidden}
main{display:flex;flex:1;min-height:0}.left{width:497px;display:flex;flex-direction:column;flex:none}.g{width:7px;flex:none;display:flex;align-items:center;justify-content:center}.g b{width:3px;height:18px;background:radial-gradient(circle,#aaa .7px,transparent 1px) 0 0/3px 3px}</style>
<title-bar></title-bar><menu-bar></menu-bar>
<tool-bar items="|| new open save layout layman style | hand* panzoom zin zout zfull zsel zlay ~z11 zlast ~znext bmk mesh book bmks clock refresh | select+ epsel+ desel+ selloc+ | ident abacus gear* sigma table+ ruler+ note ~action+ | help | pycon swipe terrain boat valve leaf | tri globep^ globes globeb"></tool-bar>
<tool-bar items="|| addlayer geopkg vnew feather chip meshnew virt | abc chart / abpin abcr / ~l1 ~l2 ~l3 ~l4 ~l5 | topo geox | magnet ~snapv^ ~snapp*^ SPIN COMBO yint avoid^ ~xx ~self+ ~trace"></tool-bar>
<tool-bar items="|| ~c1+ ~c2+ ~c3+ ~c4+ ~c5+ | ~pencils^ pencil ~savee ~seg+ ~poladd ~vtool+ ~multi ~trash ~cut ~copy ~paste ~undo ~redo | ~setsq ~polmov+ ~polrot ~polscl ~simp ~ring ~part ~fill ~delring ~delpart ~reshape ~offset ~vrev ~trim ~split ~split ~merge ~attrs ~rotp+ ~offp"></tool-bar>
<tool-bar class="last" items="|| sat ~tgt / gpsz^ ~tgtp polgreen ~gpst / info wrench"></tool-bar>
<main><div class="left"><browser-dock></browser-dock><layers-dock></layers-dock></div><div class="g"><b></b></div><map-canvas></map-canvas><div class="g"><b></b></div><toolbox-dock></toolbox-dock></main><status-bar></status-bar>`);

/* label whose tracking is adjusted so the run takes a given width */
customElements.define('fit-label',class extends HTMLElement{connectedCallback(){if(this.shadowRoot)return;this.attachShadow({mode:'open'}).innerHTML='<style>:host{display:inline-block;flex:none;white-space:pre}</style><slot></slot>';
 const w=+this.getAttribute('w'),n=this.textContent.length,c=this.getBoundingClientRect().width;if(w&&n&&c)this.style.letterSpacing=((w-c)/n).toFixed(3)+'px'}});
</script>
</body>
</html>
